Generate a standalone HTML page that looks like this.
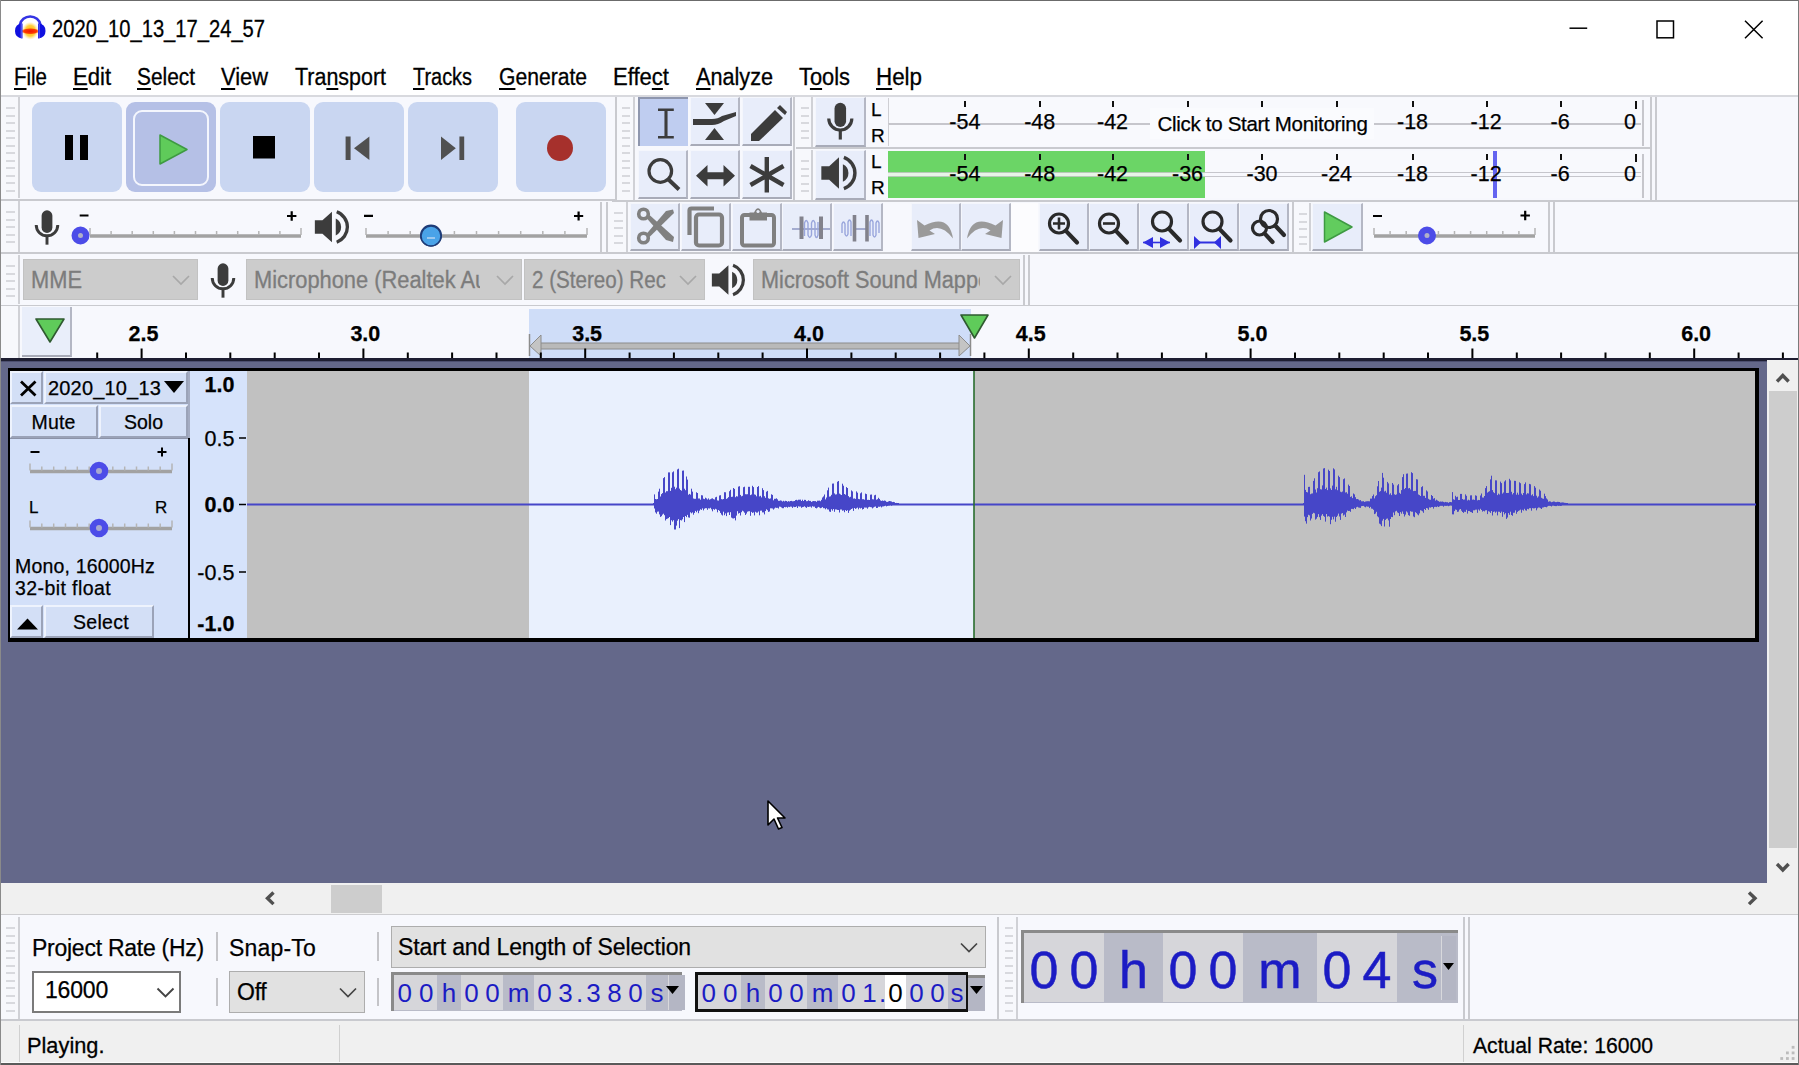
<!DOCTYPE html>
<html><head><meta charset="utf-8"><title>Audacity</title>
<style>
html,body{margin:0;padding:0;background:#fff;}
body{width:1799px;height:1065px;overflow:hidden;position:relative;font-family:"Liberation Sans",sans-serif;}
.r{position:absolute;box-sizing:border-box;}
.t{position:absolute;white-space:pre;-webkit-text-stroke:0.25px currentColor;}
svg{position:absolute;overflow:visible;}
u{text-decoration:underline;text-underline-offset:2.5px;text-decoration-thickness:1.6px;}
</style></head><body>
<div class="r" style="left:0px;top:0px;width:1799px;height:55px;background:#fff;"></div>
<div class="r" style="left:0px;top:0px;width:1799px;height:1px;background:#6b6b6b;"></div>
<svg style="left:0;top:0" width="60" height="50" viewBox="0 0 60 50">
<defs><radialGradient id="ag" cx="0.5" cy="0.5" r="0.5"><stop offset="0" stop-color="#FFB400"/><stop offset="0.6" stop-color="#FFD040"/><stop offset="1" stop-color="#FFE890" stop-opacity="0"/></radialGradient>
<radialGradient id="ar" cx="0.5" cy="0.5" r="0.5"><stop offset="0" stop-color="#F01800"/><stop offset="0.7" stop-color="#FF3C00"/><stop offset="1" stop-color="#FF6A00" stop-opacity="0"/></radialGradient></defs>
<ellipse cx="30.300" cy="30.800" rx="8.500" ry="9" fill="url(#ag)"/>
<ellipse cx="30.300" cy="31.200" rx="9.500" ry="3.200" fill="url(#ar)"/>
<path d="M19.800 25 A10.600 10.600 0 0 1 40.600 25" fill="none" stroke="#3434E4" stroke-width="2.600"/>
<path d="M22.500 23.600 V38.400 Q15 38 15 31 Q15 24 22.500 23.600 Z" fill="#1010E0"/>
<path d="M38 23.600 V38.400 Q45.500 38 45.500 31 Q45.500 24 38 23.600 Z" fill="#1010E0"/>
<path d="M21.300 24 V38.200" stroke="#5050F0" stroke-width="1.400"/><path d="M39.200 24 V38.200" stroke="#5050F0" stroke-width="1.400"/>
</svg>
<div class="t " style="left:52.00px;top:16.00px;font-size:23.5px;line-height:26.25px;color:#000;font-weight:400;transform:scaleX(0.8578);transform-origin:0 0;-webkit-text-stroke:0.3px #000;">2020_10_13_17_24_57</div>
<svg style="left:1560px;top:10px" width="220" height="40" viewBox="0 0 220 40">
<path d="M9.500 18.200 H27.200" stroke="#000" stroke-width="1.5" fill="none"/>
<rect x="97" y="11" width="16.500" height="16.800" stroke="#000" stroke-width="1.5" fill="none"/>
<path d="M185 10.800 L202.600 28.200 M202.600 10.800 L185 28.200" stroke="#000" stroke-width="1.5" fill="none"/>
</svg>
<div class="t " style="left:14.00px;top:65.00px;font-size:23px;line-height:25.69px;color:#000;font-weight:400;transform:scaleX(0.8904);transform-origin:0 0;-webkit-text-stroke:0.3px #000;"><u>F</u>ile</div>
<div class="t " style="left:73.00px;top:65.00px;font-size:23px;line-height:25.69px;color:#000;font-weight:400;transform:scaleX(0.9588);transform-origin:0 0;-webkit-text-stroke:0.3px #000;"><u>E</u>dit</div>
<div class="t " style="left:137.00px;top:65.00px;font-size:23px;line-height:25.69px;color:#000;font-weight:400;transform:scaleX(0.9073);transform-origin:0 0;-webkit-text-stroke:0.3px #000;"><u>S</u>elect</div>
<div class="t " style="left:221.00px;top:65.00px;font-size:23px;line-height:25.69px;color:#000;font-weight:400;transform:scaleX(0.9507);transform-origin:0 0;-webkit-text-stroke:0.3px #000;"><u>V</u>iew</div>
<div class="t " style="left:295.00px;top:65.00px;font-size:23px;line-height:25.69px;color:#000;font-weight:400;transform:scaleX(0.9327);transform-origin:0 0;-webkit-text-stroke:0.3px #000;">Tra<u>n</u>sport</div>
<div class="t " style="left:413.00px;top:65.00px;font-size:23px;line-height:25.69px;color:#000;font-weight:400;transform:scaleX(0.8658);transform-origin:0 0;-webkit-text-stroke:0.3px #000;"><u>T</u>racks</div>
<div class="t " style="left:499.00px;top:65.00px;font-size:23px;line-height:25.69px;color:#000;font-weight:400;transform:scaleX(0.9176);transform-origin:0 0;-webkit-text-stroke:0.3px #000;"><u>G</u>enerate</div>
<div class="t " style="left:613.00px;top:65.00px;font-size:23px;line-height:25.69px;color:#000;font-weight:400;transform:scaleX(0.9591);transform-origin:0 0;-webkit-text-stroke:0.3px #000;">Effe<u>c</u>t</div>
<div class="t " style="left:696.00px;top:65.00px;font-size:23px;line-height:25.69px;color:#000;font-weight:400;transform:scaleX(0.9410);transform-origin:0 0;-webkit-text-stroke:0.3px #000;"><u>A</u>nalyze</div>
<div class="t " style="left:799.00px;top:65.00px;font-size:23px;line-height:25.69px;color:#000;font-weight:400;transform:scaleX(0.9498);transform-origin:0 0;-webkit-text-stroke:0.3px #000;">T<u>o</u>ols</div>
<div class="t " style="left:876.00px;top:65.00px;font-size:23px;line-height:25.69px;color:#000;font-weight:400;transform:scaleX(0.9725);transform-origin:0 0;-webkit-text-stroke:0.3px #000;"><u>H</u>elp</div>
<div class="r" style="left:0px;top:95px;width:1799px;height:212px;background:#F7F8FD;"></div>
<div class="r" style="left:0px;top:95px;width:1799px;height:2px;background:#D8D9DE;"></div>
<div class="r" style="left:0px;top:199px;width:616px;height:2px;background:#C9CACF;"></div>
<div class="r" style="left:0px;top:252px;width:1799px;height:2px;background:#C9CACF;"></div>
<div class="r" style="left:0px;top:305px;width:1799px;height:2px;background:#C9CACF;"></div>
<div class="r" style="left:0px;top:97px;width:20px;height:101px;background:#F7F8FC;border-right:2px solid #D0D1D6"></div>
<div class="r" style="left:6.0px;top:107px;width:9.0px;height:2px;background:#D8D9DE;"></div>
<div class="r" style="left:6.0px;top:114.5px;width:9.0px;height:2px;background:#D8D9DE;"></div>
<div class="r" style="left:6.0px;top:122.0px;width:9.0px;height:2px;background:#D8D9DE;"></div>
<div class="r" style="left:6.0px;top:129.5px;width:9.0px;height:2px;background:#D8D9DE;"></div>
<div class="r" style="left:6.0px;top:137.0px;width:9.0px;height:2px;background:#D8D9DE;"></div>
<div class="r" style="left:6.0px;top:144.5px;width:9.0px;height:2px;background:#D8D9DE;"></div>
<div class="r" style="left:6.0px;top:152.0px;width:9.0px;height:2px;background:#D8D9DE;"></div>
<div class="r" style="left:6.0px;top:159.5px;width:9.0px;height:2px;background:#D8D9DE;"></div>
<div class="r" style="left:6.0px;top:167.0px;width:9.0px;height:2px;background:#D8D9DE;"></div>
<div class="r" style="left:6.0px;top:174.5px;width:9.0px;height:2px;background:#D8D9DE;"></div>
<div class="r" style="left:6.0px;top:182.0px;width:9.0px;height:2px;background:#D8D9DE;"></div>
<div class="r" style="left:6.0px;top:189.5px;width:9.0px;height:2px;background:#D8D9DE;"></div>
<div class="r" style="left:32px;top:102px;width:90px;height:90px;background:#C9D6F1;border-radius:9px"></div>
<div class="r" style="left:126px;top:102px;width:90px;height:90px;background:#B5C0E6;border-radius:9px"></div>
<div class="r" style="left:220px;top:102px;width:90px;height:90px;background:#C9D6F1;border-radius:9px"></div>
<div class="r" style="left:314px;top:102px;width:90px;height:90px;background:#C9D6F1;border-radius:9px"></div>
<div class="r" style="left:408px;top:102px;width:90px;height:90px;background:#C9D6F1;border-radius:9px"></div>
<div class="r" style="left:516px;top:102px;width:90px;height:90px;background:#C9D6F1;border-radius:9px"></div>
<div class="r" style="left:133px;top:110px;width:76px;height:76px;background:transparent;border:2px solid #F4F6FD;border-radius:9px"></div>
<svg style="left:0;top:0" width="620" height="200" viewBox="0 0 620 200">
<rect x="65" y="135" width="8" height="25" fill="#000"/><rect x="80" y="135" width="8" height="25" fill="#000"/>
<path d="M160 135 L187 149.500 L160 164 Z" fill="#5FCB5A" stroke="#3E9A42" stroke-width="1.5" stroke-linejoin="round"/>
<rect x="253" y="136" width="22" height="22.500" fill="#000"/>
<rect x="345.600" y="136.500" width="5" height="23.500" fill="#505050"/><path d="M369.400 136.500 L354 148.200 L369.400 160 Z" fill="#505050"/>
<rect x="459.400" y="136.500" width="4.800" height="23.500" fill="#505050"/><path d="M441 136.500 L455.800 148.200 L441 160 Z" fill="#505050"/>
<circle cx="560" cy="148" r="13" fill="#A6302C"/>
</svg>
<div class="r" style="left:615px;top:97px;width:2px;height:103px;background:#C9CACF;"></div>
<div class="r" style="left:617px;top:97px;width:18px;height:103px;background:#F7F8FC;border-right:2px solid #D0D1D6"></div>
<div class="r" style="left:622.4px;top:107px;width:8.1px;height:2px;background:#D8D9DE;"></div>
<div class="r" style="left:622.4px;top:114.5px;width:8.1px;height:2px;background:#D8D9DE;"></div>
<div class="r" style="left:622.4px;top:122.0px;width:8.1px;height:2px;background:#D8D9DE;"></div>
<div class="r" style="left:622.4px;top:129.5px;width:8.1px;height:2px;background:#D8D9DE;"></div>
<div class="r" style="left:622.4px;top:137.0px;width:8.1px;height:2px;background:#D8D9DE;"></div>
<div class="r" style="left:622.4px;top:144.5px;width:8.1px;height:2px;background:#D8D9DE;"></div>
<div class="r" style="left:622.4px;top:152.0px;width:8.1px;height:2px;background:#D8D9DE;"></div>
<div class="r" style="left:622.4px;top:159.5px;width:8.1px;height:2px;background:#D8D9DE;"></div>
<div class="r" style="left:622.4px;top:167.0px;width:8.1px;height:2px;background:#D8D9DE;"></div>
<div class="r" style="left:622.4px;top:174.5px;width:8.1px;height:2px;background:#D8D9DE;"></div>
<div class="r" style="left:622.4px;top:182.0px;width:8.1px;height:2px;background:#D8D9DE;"></div>
<div class="r" style="left:622.4px;top:189.5px;width:8.1px;height:2px;background:#D8D9DE;"></div>
<div class="r" style="left:638px;top:97px;width:50px;height:49px;background:#BFCDF0;border-top:2px solid #8E96AE;border-left:2px solid #8E96AE"></div>
<div class="r" style="left:690px;top:97px;width:50px;height:49px;background:#E8EDFA;border-bottom:2px solid #A8ABB8;border-right:2px solid #B4B7C4;border-top:1px solid #F4F6FC;border-left:1px solid #F4F6FC"></div>
<div class="r" style="left:742px;top:97px;width:50px;height:49px;background:#E8EDFA;border-bottom:2px solid #A8ABB8;border-right:2px solid #B4B7C4;border-top:1px solid #F4F6FC;border-left:1px solid #F4F6FC"></div>
<div class="r" style="left:638px;top:150px;width:50px;height:49px;background:#E8EDFA;border-bottom:2px solid #A8ABB8;border-right:2px solid #B4B7C4;border-top:1px solid #F4F6FC;border-left:1px solid #F4F6FC"></div>
<div class="r" style="left:690px;top:150px;width:50px;height:49px;background:#E8EDFA;border-bottom:2px solid #A8ABB8;border-right:2px solid #B4B7C4;border-top:1px solid #F4F6FC;border-left:1px solid #F4F6FC"></div>
<div class="r" style="left:742px;top:150px;width:50px;height:49px;background:#E8EDFA;border-bottom:2px solid #A8ABB8;border-right:2px solid #B4B7C4;border-top:1px solid #F4F6FC;border-left:1px solid #F4F6FC"></div>
<svg style="left:0;top:0" width="900" height="260" viewBox="0 0 900 260">
<!-- I-beam -->
<g stroke="#3C3C3C" fill="none"><path d="M666 109.500 V137.500" stroke-width="3.1"/><path d="M658 109.700 H673.800 M658 137.300 H673.800" stroke-width="2.5"/></g>
<!-- envelope tool -->
<g fill="#3C3C3C"><path d="M705 103 H724 L714.500 115 Z"/><path d="M705 140 H724 L714.500 128 Z"/>
<path d="M693 119 H712 Q718 119 722 116 L736 112 L736 116 L724 121 Q718 125 712 125 H693 Z"/></g>
<!-- pencil -->
<g fill="#3C3C3C"><path d="M751 134 L775 110 L783 118 L759 141 L751 141 Z"/><path d="M777 108 L780 105 L787 112 L785 115 Z"/></g>
<!-- zoom -->
<g stroke="#3C3C3C" fill="none"><circle cx="660.300" cy="171" r="11.300" stroke-width="3.2"/><path d="M668.500 179.500 L679 189.500" stroke-width="4"/></g>
<!-- time shift -->
<g fill="#3C3C3C"><path d="M696 175.700 L707.500 165 V172.200 H723.500 V165 L735 175.700 L723.500 186.500 V179.300 H707.500 V186.500 Z"/></g>
<!-- multi -->
<g stroke="#3C3C3C" stroke-width="4.4" fill="none"><path d="M766.800 157 V192.500 M750.500 166 L783.500 185 M783.500 166 L750.500 185"/></g>
</svg>
<div class="r" style="left:793px;top:97px;width:2px;height:104px;background:#C9CACF;"></div>
<div class="r" style="left:796px;top:97px;width:17px;height:50px;background:#F7F8FC;border-right:2px solid #D0D1D6"></div>
<div class="r" style="left:801.1px;top:107px;width:7.65px;height:2px;background:#D8D9DE;"></div>
<div class="r" style="left:801.1px;top:114.5px;width:7.65px;height:2px;background:#D8D9DE;"></div>
<div class="r" style="left:801.1px;top:122.0px;width:7.65px;height:2px;background:#D8D9DE;"></div>
<div class="r" style="left:801.1px;top:129.5px;width:7.65px;height:2px;background:#D8D9DE;"></div>
<div class="r" style="left:801.1px;top:137.0px;width:7.65px;height:2px;background:#D8D9DE;"></div>
<div class="r" style="left:796px;top:150px;width:17px;height:50px;background:#F7F8FC;border-right:2px solid #D0D1D6"></div>
<div class="r" style="left:801.1px;top:160px;width:7.65px;height:2px;background:#D8D9DE;"></div>
<div class="r" style="left:801.1px;top:167.5px;width:7.65px;height:2px;background:#D8D9DE;"></div>
<div class="r" style="left:801.1px;top:175.0px;width:7.65px;height:2px;background:#D8D9DE;"></div>
<div class="r" style="left:801.1px;top:182.5px;width:7.65px;height:2px;background:#D8D9DE;"></div>
<div class="r" style="left:801.1px;top:190.0px;width:7.65px;height:2px;background:#D8D9DE;"></div>
<div class="r" style="left:815px;top:97px;width:51px;height:50px;background:#E8EDFA;border-bottom:2px solid #A8ABB8;border-right:2px solid #B4B7C4;border-top:1px solid #F4F6FC;border-left:1px solid #F4F6FC"></div>
<div class="r" style="left:815px;top:150px;width:51px;height:50px;background:#E8EDFA;border-bottom:2px solid #A8ABB8;border-right:2px solid #B4B7C4;border-top:1px solid #F4F6FC;border-left:1px solid #F4F6FC"></div>
<svg style="left:0;top:0" width="900" height="260" viewBox="0 0 900 260"><g transform="translate(840.3,121.7) scale(1.05)" fill="none" stroke="#3C3C3C">
<rect x="-5.5" y="-18" width="11" height="23" rx="5.5" fill="#3C3C3C" stroke="none"/>
<path d="M-11 -3 A11 11 0 0 0 11 -3" stroke-width="3"/><path d="M0 8 V17" stroke-width="3"/></g><g transform="translate(838,173) scale(0.98)" fill="#3C3C3C" stroke="none">
<path d="M-17 -7 H-9 L1 -16 V16 L-9 7 H-17 Z"/>
<path d="M5 -9 A10 10 0 0 1 5 9 Z"/>
<path d="M6 -16 A17 17 0 0 1 6 16" fill="none" stroke="#3C3C3C" stroke-width="3.5"/></g></svg>
<div class="t " style="left:871.00px;top:99.00px;font-size:19px;line-height:21.22px;color:#000;font-weight:400;">L</div>
<div class="t " style="left:871.00px;top:125.00px;font-size:19px;line-height:21.22px;color:#000;font-weight:400;">R</div>
<div class="t " style="left:871.00px;top:151.00px;font-size:19px;line-height:21.22px;color:#000;font-weight:400;">L</div>
<div class="t " style="left:871.00px;top:176.50px;font-size:19px;line-height:21.22px;color:#000;font-weight:400;">R</div>
<div class="r" style="left:888px;top:98px;width:753px;height:25px;background:#F8F9FD;border-left:1px solid #CFCFD4"></div>
<div class="r" style="left:888px;top:123px;width:753px;height:23px;background:#F8F9FD;border-top:2px solid #C6C6CC;border-left:1px solid #CFCFD4"></div>
<div class="r" style="left:888px;top:151px;width:753px;height:21px;background:#F8F9FD;"></div>
<div class="r" style="left:888px;top:177px;width:753px;height:21px;background:#F8F9FD;"></div>
<div class="r" style="left:888px;top:172px;width:753px;height:1px;background:#C6C6CC;"></div>
<div class="r" style="left:888px;top:176px;width:753px;height:1px;background:#C6C6CC;"></div>
<div class="r" style="left:888px;top:151px;width:317px;height:21px;background:#6BD566;"></div>
<div class="r" style="left:888px;top:177px;width:317px;height:21px;background:#6BD566;"></div>
<div class="r" style="left:888px;top:172px;width:317px;height:5px;background:#E8F4E8;border-top:1px solid #B8C8B8;border-bottom:1px solid #B8C8B8"></div>
<div class="r" style="left:1493px;top:151px;width:4px;height:47px;background:#6464F0;"></div>
<div class="r" style="left:964px;top:101px;width:2px;height:6px;background:#111;"></div>
<div class="r" style="left:964px;top:154px;width:2px;height:6px;background:#111;"></div>
<div class="t " style="left:949.30px;top:110.00px;font-size:21.5px;line-height:24.02px;color:#000;font-weight:400;">-54</div>
<div class="t " style="left:949.30px;top:162.00px;font-size:21.5px;line-height:24.02px;color:#000;font-weight:400;">-54</div>
<div class="r" style="left:1039px;top:101px;width:2px;height:6px;background:#111;"></div>
<div class="r" style="left:1039px;top:154px;width:2px;height:6px;background:#111;"></div>
<div class="t " style="left:1024.20px;top:110.00px;font-size:21.5px;line-height:24.02px;color:#000;font-weight:400;">-48</div>
<div class="t " style="left:1024.20px;top:162.00px;font-size:21.5px;line-height:24.02px;color:#000;font-weight:400;">-48</div>
<div class="r" style="left:1112px;top:101px;width:2px;height:6px;background:#111;"></div>
<div class="r" style="left:1112px;top:154px;width:2px;height:6px;background:#111;"></div>
<div class="t " style="left:1097.00px;top:110.00px;font-size:21.5px;line-height:24.02px;color:#000;font-weight:400;">-42</div>
<div class="t " style="left:1097.00px;top:162.00px;font-size:21.5px;line-height:24.02px;color:#000;font-weight:400;">-42</div>
<div class="r" style="left:1187px;top:101px;width:2px;height:6px;background:#111;"></div>
<div class="r" style="left:1187px;top:154px;width:2px;height:6px;background:#111;"></div>
<div class="t " style="left:1172.00px;top:162.00px;font-size:21.5px;line-height:24.02px;color:#000;font-weight:400;">-36</div>
<div class="r" style="left:1261px;top:101px;width:2px;height:6px;background:#111;"></div>
<div class="r" style="left:1261px;top:154px;width:2px;height:6px;background:#111;"></div>
<div class="t " style="left:1246.50px;top:162.00px;font-size:21.5px;line-height:24.02px;color:#000;font-weight:400;">-30</div>
<div class="r" style="left:1336px;top:101px;width:2px;height:6px;background:#111;"></div>
<div class="r" style="left:1336px;top:154px;width:2px;height:6px;background:#111;"></div>
<div class="t " style="left:1321.00px;top:162.00px;font-size:21.5px;line-height:24.02px;color:#000;font-weight:400;">-24</div>
<div class="r" style="left:1412px;top:101px;width:2px;height:6px;background:#111;"></div>
<div class="r" style="left:1412px;top:154px;width:2px;height:6px;background:#111;"></div>
<div class="t " style="left:1397.00px;top:110.00px;font-size:21.5px;line-height:24.02px;color:#000;font-weight:400;">-18</div>
<div class="t " style="left:1397.00px;top:162.00px;font-size:21.5px;line-height:24.02px;color:#000;font-weight:400;">-18</div>
<div class="r" style="left:1486px;top:101px;width:2px;height:6px;background:#111;"></div>
<div class="r" style="left:1486px;top:154px;width:2px;height:6px;background:#111;"></div>
<div class="t " style="left:1470.60px;top:110.00px;font-size:21.5px;line-height:24.02px;color:#000;font-weight:400;">-12</div>
<div class="t " style="left:1470.60px;top:162.00px;font-size:21.5px;line-height:24.02px;color:#000;font-weight:400;">-12</div>
<div class="r" style="left:1560px;top:101px;width:2px;height:6px;background:#111;"></div>
<div class="r" style="left:1560px;top:154px;width:2px;height:6px;background:#111;"></div>
<div class="t " style="left:1550.50px;top:110.00px;font-size:21.5px;line-height:24.02px;color:#000;font-weight:400;">-6</div>
<div class="t " style="left:1550.50px;top:162.00px;font-size:21.5px;line-height:24.02px;color:#000;font-weight:400;">-6</div>
<div class="r" style="left:1635px;top:101px;width:2px;height:8px;background:#111;"></div>
<div class="r" style="left:1635px;top:154px;width:2px;height:8px;background:#111;"></div>
<div class="t " style="left:1624.00px;top:110.00px;font-size:21.5px;line-height:24.02px;color:#000;font-weight:400;">0</div>
<div class="t " style="left:1624.00px;top:162.00px;font-size:21.5px;line-height:24.02px;color:#000;font-weight:400;">0</div>
<div class="r" style="left:1150px;top:108px;width:224px;height:31px;background:#FAFBFE;"></div>
<div class="t " style="left:1157.50px;top:112.50px;font-size:20.5px;line-height:22.90px;color:#000;font-weight:400;letter-spacing:-0.304px;">Click to Start Monitoring</div>
<div class="r" style="left:1642px;top:100px;width:2px;height:46px;background:#C6C6CC;"></div>
<div class="r" style="left:1642px;top:154px;width:2px;height:44px;background:#C6C6CC;"></div>
<div class="r" style="left:1650px;top:97px;width:2px;height:104px;background:#C9CACF;"></div>
<div class="r" style="left:1655px;top:97px;width:2px;height:104px;background:#C9CACF;"></div>
<div class="r" style="left:796px;top:147px;width:856px;height:2px;background:#C9CACF;"></div>
<div class="r" style="left:612px;top:200px;width:1187px;height:2px;background:#C9CACF;"></div>
<div class="r" style="left:0px;top:201px;width:20px;height:51px;background:#F7F8FC;border-right:2px solid #D0D1D6"></div>
<div class="r" style="left:6.0px;top:211px;width:9.0px;height:2px;background:#D8D9DE;"></div>
<div class="r" style="left:6.0px;top:218.5px;width:9.0px;height:2px;background:#D8D9DE;"></div>
<div class="r" style="left:6.0px;top:226.0px;width:9.0px;height:2px;background:#D8D9DE;"></div>
<div class="r" style="left:6.0px;top:233.5px;width:9.0px;height:2px;background:#D8D9DE;"></div>
<div class="r" style="left:6.0px;top:241.0px;width:9.0px;height:2px;background:#D8D9DE;"></div>
<svg style="left:0;top:0" width="1600" height="260" viewBox="0 0 1600 260">
<g transform="translate(47,228) scale(0.98)" fill="none" stroke="#3C3C3C">
<rect x="-5.5" y="-18" width="11" height="23" rx="5.5" fill="#3C3C3C" stroke="none"/>
<path d="M-11 -3 A11 11 0 0 0 11 -3" stroke-width="3"/><path d="M0 8 V17" stroke-width="3"/></g><g transform="translate(331,227) scale(0.95)" fill="#3C3C3C" stroke="none">
<path d="M-17 -7 H-9 L1 -16 V16 L-9 7 H-17 Z"/>
<path d="M5 -9 A10 10 0 0 1 5 9 Z"/>
<path d="M6 -16 A17 17 0 0 1 6 16" fill="none" stroke="#3C3C3C" stroke-width="3.5"/></g>
<path d="M90 236 H301" stroke="#A2A2A2" stroke-width="3.4"/><path d="M90.0 235 V228" stroke="#B5B5B5" stroke-width="1.5"/><path d="M111.1 235 V231" stroke="#B5B5B5" stroke-width="1.5"/><path d="M132.2 235 V231" stroke="#B5B5B5" stroke-width="1.5"/><path d="M153.3 235 V231" stroke="#B5B5B5" stroke-width="1.5"/><path d="M174.4 235 V231" stroke="#B5B5B5" stroke-width="1.5"/><path d="M195.5 235 V231" stroke="#B5B5B5" stroke-width="1.5"/><path d="M216.6 235 V231" stroke="#B5B5B5" stroke-width="1.5"/><path d="M237.7 235 V231" stroke="#B5B5B5" stroke-width="1.5"/><path d="M258.8 235 V231" stroke="#B5B5B5" stroke-width="1.5"/><path d="M279.9 235 V231" stroke="#B5B5B5" stroke-width="1.5"/><path d="M301.0 235 V228" stroke="#B5B5B5" stroke-width="1.5"/><circle cx="80.5" cy="235.5" r="5.75" fill="#B0B0C8" stroke="#4C4CE8" stroke-width="6.5"/>
<path d="M366 236 H587" stroke="#A2A2A2" stroke-width="3.4"/><path d="M366.0 235 V228" stroke="#B5B5B5" stroke-width="1.5"/><path d="M388.1 235 V231" stroke="#B5B5B5" stroke-width="1.5"/><path d="M410.2 235 V231" stroke="#B5B5B5" stroke-width="1.5"/><path d="M432.3 235 V231" stroke="#B5B5B5" stroke-width="1.5"/><path d="M454.4 235 V231" stroke="#B5B5B5" stroke-width="1.5"/><path d="M476.5 235 V231" stroke="#B5B5B5" stroke-width="1.5"/><path d="M498.6 235 V231" stroke="#B5B5B5" stroke-width="1.5"/><path d="M520.7 235 V231" stroke="#B5B5B5" stroke-width="1.5"/><path d="M542.8 235 V231" stroke="#B5B5B5" stroke-width="1.5"/><path d="M564.9 235 V231" stroke="#B5B5B5" stroke-width="1.5"/><path d="M587.0 235 V228" stroke="#B5B5B5" stroke-width="1.5"/><circle cx="431" cy="235.5" r="8.6" fill="#4AA3E8" stroke="#1E3C78" stroke-width="4.8"/>
<circle cx="431" cy="236" r="10" fill="#4AA3E8" stroke="#1E3C78" stroke-width="1.5"/>
<path d="M427 238 H435" stroke="#9CC8EE" stroke-width="2"/>
<g stroke="#000" stroke-width="2.2"><path d="M79.700 215.500 H88.500 M287 216 H296.400 M291.700 211.300 V220.700 M364 215.800 H373 M574 216 H583.200 M578.600 211.400 V220.600"/></g>
</svg>
<div class="r" style="left:600px;top:202px;width:2px;height:50px;background:#C9CACF;"></div>
<div class="r" style="left:606px;top:202px;width:2px;height:50px;background:#C9CACF;"></div>
<div class="r" style="left:608px;top:202px;width:20px;height:50px;background:#F7F8FC;border-right:2px solid #D0D1D6"></div>
<div class="r" style="left:614.0px;top:212px;width:9.0px;height:2px;background:#D8D9DE;"></div>
<div class="r" style="left:614.0px;top:219.5px;width:9.0px;height:2px;background:#D8D9DE;"></div>
<div class="r" style="left:614.0px;top:227.0px;width:9.0px;height:2px;background:#D8D9DE;"></div>
<div class="r" style="left:614.0px;top:234.5px;width:9.0px;height:2px;background:#D8D9DE;"></div>
<div class="r" style="left:614.0px;top:242.0px;width:9.0px;height:2px;background:#D8D9DE;"></div>
<div class="r" style="left:630px;top:203px;width:50px;height:48px;background:#E8EDFA;border-bottom:2px solid #A8ABB8;border-right:2px solid #B4B7C4;border-top:1px solid #F4F6FC;border-left:1px solid #F4F6FC"></div>
<div class="r" style="left:681px;top:203px;width:50px;height:48px;background:#E8EDFA;border-bottom:2px solid #A8ABB8;border-right:2px solid #B4B7C4;border-top:1px solid #F4F6FC;border-left:1px solid #F4F6FC"></div>
<div class="r" style="left:732px;top:203px;width:50px;height:48px;background:#E8EDFA;border-bottom:2px solid #A8ABB8;border-right:2px solid #B4B7C4;border-top:1px solid #F4F6FC;border-left:1px solid #F4F6FC"></div>
<div class="r" style="left:782px;top:203px;width:50px;height:48px;background:#E8EDFA;border-bottom:2px solid #A8ABB8;border-right:2px solid #B4B7C4;border-top:1px solid #F4F6FC;border-left:1px solid #F4F6FC"></div>
<div class="r" style="left:833px;top:203px;width:50px;height:48px;background:#E8EDFA;border-bottom:2px solid #A8ABB8;border-right:2px solid #B4B7C4;border-top:1px solid #F4F6FC;border-left:1px solid #F4F6FC"></div>
<div class="r" style="left:911px;top:203px;width:50px;height:48px;background:#E8EDFA;border-bottom:2px solid #A8ABB8;border-right:2px solid #B4B7C4;border-top:1px solid #F4F6FC;border-left:1px solid #F4F6FC"></div>
<div class="r" style="left:961px;top:203px;width:50px;height:48px;background:#E8EDFA;border-bottom:2px solid #A8ABB8;border-right:2px solid #B4B7C4;border-top:1px solid #F4F6FC;border-left:1px solid #F4F6FC"></div>
<div class="r" style="left:1011px;top:203px;width:27px;height:49px;background:#FCFCFE;"></div>
<div class="r" style="left:1039px;top:203px;width:50px;height:48px;background:#E8EDFA;border-bottom:2px solid #A8ABB8;border-right:2px solid #B4B7C4;border-top:1px solid #F4F6FC;border-left:1px solid #F4F6FC"></div>
<div class="r" style="left:1089px;top:203px;width:50px;height:48px;background:#E8EDFA;border-bottom:2px solid #A8ABB8;border-right:2px solid #B4B7C4;border-top:1px solid #F4F6FC;border-left:1px solid #F4F6FC"></div>
<div class="r" style="left:1139px;top:203px;width:50px;height:48px;background:#E8EDFA;border-bottom:2px solid #A8ABB8;border-right:2px solid #B4B7C4;border-top:1px solid #F4F6FC;border-left:1px solid #F4F6FC"></div>
<div class="r" style="left:1189px;top:203px;width:50px;height:48px;background:#E8EDFA;border-bottom:2px solid #A8ABB8;border-right:2px solid #B4B7C4;border-top:1px solid #F4F6FC;border-left:1px solid #F4F6FC"></div>
<div class="r" style="left:1239px;top:203px;width:50px;height:48px;background:#E8EDFA;border-bottom:2px solid #A8ABB8;border-right:2px solid #B4B7C4;border-top:1px solid #F4F6FC;border-left:1px solid #F4F6FC"></div>
<svg style="left:0;top:0" width="1600" height="260" viewBox="0 0 1600 260">
<!-- cut -->
<g stroke="#808080" fill="none" stroke-width="3.6"><circle cx="643.5" cy="214" r="4.8"/><circle cx="643.5" cy="238" r="4.8"/></g>
<g fill="#808080"><path d="M646 217.500 L649.500 215 L674 237 L673 242 L666 240 Z"/><path d="M646 234.500 L649.500 237 L674 213 L673 209.500 L666 211 Z"/></g>
<!-- copy -->
<g stroke="#808080" fill="none" stroke-width="4.2" stroke-linejoin="round"><path d="M689.500 235 V210.500 Q689.500 208.500 691.500 208.500 H714"/><rect x="696" y="214.500" width="26" height="31" rx="3"/></g>
<!-- paste -->
<g stroke="#808080" fill="none" stroke-width="4" stroke-linejoin="round"><rect x="742" y="215" width="32" height="30.500" rx="2.500"/></g>
<path d="M749.500 220.500 V212.500 H754 Q758 204 762 212.500 H767 V220.500 Z" fill="#808080"/><circle cx="758" cy="211.500" r="1.6" fill="#E8EDFA"/>
<!-- trim -->
<path d="M792 229 H830" stroke="#A4ACD0" stroke-width="2"/>
<path d="M804.500 236 V223 Q806.200 218 808 223 V235 Q809.700 240 811.500 235 V223 Q813.200 218 815 223 V235 Q816.500 240 818 235 V222" stroke="#9AA6DC" stroke-width="1.4" fill="none"/>
<g stroke="#82828C" stroke-width="4" fill="none"><path d="M801.500 216.500 V239 M821 216.500 V239"/></g>
<!-- silence -->
<path d="M855 229 H867" stroke="#A4ACD0" stroke-width="2"/>
<path d="M842 233 V224 Q843.500 220 845 224 V234 Q846.500 238 848 234 V222 Q849.500 218 851 222 V236 M870 236 V222 Q871.500 218 873 222 V235 Q874.500 239 876 235 V223 Q877.500 219 879 223 V233" stroke="#9AA6DC" stroke-width="1.4" fill="none"/>
<g stroke="#82828C" stroke-width="3.6" fill="none"><path d="M854.500 215 V241.500 M867 215 V241.500"/></g>
<!-- undo / redo -->
<g fill="#9A9A9A"><path d="M917 220 L918.500 238 L935 234 L929.500 230.500 Q941 223 953 238.500 Q949 213 924.500 225.500 Z"/>
<path d="M1003 220 L1001.500 238 L985 234 L990.500 230.500 Q979 223 967 238.500 Q971 213 995.500 225.500 Z"/></g>
</svg>
<svg style="left:0;top:0" width="1600" height="260" viewBox="0 0 1600 260">
<g stroke="#2A2A2A" fill="none"><circle cx="1059" cy="223.5" r="9.5" stroke-width="3.2"/><path d="M1066.125 231.1 L1077 242.5" stroke-width="4.2" stroke-linecap="round"/></g><path d="M1053 223.500 H1065 M1059 217.500 V229.500" stroke="#2A2A2A" stroke-width="2.6"/>
<g stroke="#2A2A2A" fill="none"><circle cx="1109" cy="223.5" r="9.5" stroke-width="3.2"/><path d="M1116.125 231.1 L1127 242.5" stroke-width="4.2" stroke-linecap="round"/></g><path d="M1103 223.500 H1115" stroke="#2A2A2A" stroke-width="2.6"/>
<g stroke="#2A2A2A" fill="none"><circle cx="1162" cy="221.5" r="9.5" stroke-width="3.2"/><path d="M1169.125 229.1 L1180 240.5" stroke-width="4.2" stroke-linecap="round"/></g><path d="M1143 242.500 H1170" stroke="#3030E0" stroke-width="1.6"/><path d="M1143 242.500 L1153 237 V248 Z M1170 242.500 L1160 237 V248 Z" fill="#3030E0"/>
<g stroke="#2A2A2A" fill="none"><circle cx="1212.5" cy="221.5" r="9.5" stroke-width="3.2"/><path d="M1219.625 229.1 L1230.5 240.5" stroke-width="4.2" stroke-linecap="round"/></g><path d="M1194 242.500 H1221" stroke="#3030E0" stroke-width="2"/><path d="M1194 236 L1201 242.500 L1194 249 Z M1221 236 L1214 242.500 L1221 249 Z" fill="#3030E0"/>
<g stroke="#2A2A2A" fill="none"><circle cx="1269" cy="219" r="8.5" stroke-width="3.2"/><path d="M1275.375 225.8 L1284 235" stroke-width="4.2" stroke-linecap="round"/></g><g stroke="#2A2A2A" fill="none"><circle cx="1259.5" cy="228" r="7" stroke-width="3.2"/><path d="M1264.75 233.6 L1272.5 242" stroke-width="4.2" stroke-linecap="round"/></g>
</svg>
<div class="r" style="left:1292px;top:202px;width:2px;height:50px;background:#C9CACF;"></div>
<div class="r" style="left:1294px;top:203px;width:17px;height:48px;background:#F7F8FC;border-right:2px solid #D0D1D6"></div>
<div class="r" style="left:1299.1px;top:213px;width:7.65px;height:2px;background:#D8D9DE;"></div>
<div class="r" style="left:1299.1px;top:220.5px;width:7.65px;height:2px;background:#D8D9DE;"></div>
<div class="r" style="left:1299.1px;top:228.0px;width:7.65px;height:2px;background:#D8D9DE;"></div>
<div class="r" style="left:1299.1px;top:235.5px;width:7.65px;height:2px;background:#D8D9DE;"></div>
<div class="r" style="left:1299.1px;top:243.0px;width:7.65px;height:2px;background:#D8D9DE;"></div>
<div class="r" style="left:1312px;top:203px;width:51px;height:48px;background:#E8EDFA;border-bottom:2px solid #A8ABB8;border-right:2px solid #B4B7C4;border-top:1px solid #F4F6FC;border-left:1px solid #F4F6FC"></div>
<svg style="left:0;top:0" width="1600" height="260" viewBox="0 0 1600 260">
<path d="M1324.500 212 L1352 227 L1324.500 242 Z" fill="#62CC5E" stroke="#3E9A42" stroke-width="1.5" stroke-linejoin="round"/>
<path d="M1374 236 H1535" stroke="#A2A2A2" stroke-width="3.4"/><path d="M1374.0 235 V228" stroke="#B5B5B5" stroke-width="1.5"/><path d="M1390.1 235 V231" stroke="#B5B5B5" stroke-width="1.5"/><path d="M1406.2 235 V231" stroke="#B5B5B5" stroke-width="1.5"/><path d="M1422.3 235 V231" stroke="#B5B5B5" stroke-width="1.5"/><path d="M1438.4 235 V231" stroke="#B5B5B5" stroke-width="1.5"/><path d="M1454.5 235 V231" stroke="#B5B5B5" stroke-width="1.5"/><path d="M1470.6 235 V231" stroke="#B5B5B5" stroke-width="1.5"/><path d="M1486.7 235 V231" stroke="#B5B5B5" stroke-width="1.5"/><path d="M1502.8 235 V231" stroke="#B5B5B5" stroke-width="1.5"/><path d="M1518.9 235 V231" stroke="#B5B5B5" stroke-width="1.5"/><path d="M1535.0 235 V228" stroke="#B5B5B5" stroke-width="1.5"/><circle cx="1427" cy="235.5" r="5.75" fill="#B0B0C8" stroke="#4C4CE8" stroke-width="6.5"/>
<g stroke="#000" stroke-width="2.2"><path d="M1373 216 H1382 M1520.500 215.500 H1529.900 M1525.200 210.800 V220.200"/></g>
</svg>
<div class="r" style="left:1548px;top:202px;width:2px;height:50px;background:#C9CACF;"></div>
<div class="r" style="left:1553px;top:202px;width:2px;height:50px;background:#C9CACF;"></div>
<div class="r" style="left:0px;top:255px;width:20px;height:49px;background:#F7F8FC;border-right:2px solid #D0D1D6"></div>
<div class="r" style="left:6.0px;top:265px;width:9.0px;height:2px;background:#D8D9DE;"></div>
<div class="r" style="left:6.0px;top:272.5px;width:9.0px;height:2px;background:#D8D9DE;"></div>
<div class="r" style="left:6.0px;top:280.0px;width:9.0px;height:2px;background:#D8D9DE;"></div>
<div class="r" style="left:6.0px;top:287.5px;width:9.0px;height:2px;background:#D8D9DE;"></div>
<div class="r" style="left:6.0px;top:295.0px;width:9.0px;height:2px;background:#D8D9DE;"></div>
<div class="r" style="left:23px;top:259px;width:175px;height:41px;background:#CCCCCC;border:1px solid #C2C2C2"></div>
<div class="t " style="left:31.00px;top:268.30px;font-size:23px;line-height:25.69px;color:#7C7C7C;font-weight:400;transform:scaleX(0.9504);transform-origin:0 0;-webkit-text-stroke:0.3px #7C7C7C;">MME</div>
<svg style="left:0;top:0" width="1799" height="1065"><path d="M173 276.0 L181 284.0 L189 276.0" stroke="#A8A8A8" stroke-width="1.7" fill="none"/></svg>
<div class="r" style="left:246px;top:259px;width:276px;height:41px;background:#CCCCCC;border:1px solid #C2C2C2"></div>
<div class="t " style="left:254.00px;top:268.30px;font-size:23px;line-height:25.69px;color:#7C7C7C;font-weight:400;transform:scaleX(0.9498);transform-origin:0 0;-webkit-text-stroke:0.3px #7C7C7C;overflow:hidden;width:237.94px;">Microphone (Realtek Audio)</div>
<svg style="left:0;top:0" width="1799" height="1065"><path d="M497 276.0 L505 284.0 L513 276.0" stroke="#A8A8A8" stroke-width="1.7" fill="none"/></svg>
<div class="r" style="left:524px;top:259px;width:181px;height:41px;background:#CCCCCC;border:1px solid #C2C2C2"></div>
<div class="t " style="left:531.50px;top:268.30px;font-size:23px;line-height:25.69px;color:#7C7C7C;font-weight:400;transform:scaleX(0.8960);transform-origin:0 0;-webkit-text-stroke:0.3px #7C7C7C;overflow:hidden;width:149.00px;">2 (Stereo) Recording</div>
<svg style="left:0;top:0" width="1799" height="1065"><path d="M680 276.0 L688 284.0 L696 276.0" stroke="#A8A8A8" stroke-width="1.7" fill="none"/></svg>
<div class="r" style="left:753px;top:259px;width:267px;height:41px;background:#CCCCCC;border:1px solid #C2C2C2"></div>
<div class="t " style="left:760.50px;top:268.30px;font-size:23px;line-height:25.69px;color:#7C7C7C;font-weight:400;transform:scaleX(0.9430);transform-origin:0 0;-webkit-text-stroke:0.3px #7C7C7C;overflow:hidden;width:232.23px;">Microsoft Sound Mapper</div>
<svg style="left:0;top:0" width="1799" height="1065"><path d="M995 276.0 L1003 284.0 L1011 276.0" stroke="#A8A8A8" stroke-width="1.7" fill="none"/></svg>
<svg style="left:0;top:0" width="1100" height="310" viewBox="0 0 1100 310"><g transform="translate(223,281) scale(0.98)" fill="none" stroke="#3C3C3C">
<rect x="-5.5" y="-18" width="11" height="23" rx="5.5" fill="#3C3C3C" stroke="none"/>
<path d="M-11 -3 A11 11 0 0 0 11 -3" stroke-width="3"/><path d="M0 8 V17" stroke-width="3"/></g><g transform="translate(727.5,280) scale(0.92)" fill="#3C3C3C" stroke="none">
<path d="M-17 -7 H-9 L1 -16 V16 L-9 7 H-17 Z"/>
<path d="M5 -9 A10 10 0 0 1 5 9 Z"/>
<path d="M6 -16 A17 17 0 0 1 6 16" fill="none" stroke="#3C3C3C" stroke-width="3.5"/></g></svg>
<div class="r" style="left:1023px;top:255px;width:2px;height:50px;background:#C9CACF;"></div>
<div class="r" style="left:1028px;top:255px;width:2px;height:50px;background:#C9CACF;"></div>
<div class="r" style="left:0px;top:306px;width:1799px;height:52px;background:#F7F8FD;"></div>
<div class="r" style="left:0px;top:306px;width:20px;height:52px;background:#F7F8FC;border-right:2px solid #D0D1D6"></div>
<div class="r" style="left:22px;top:307px;width:50px;height:50px;background:#E9EEFA;border-right:2px solid #B4B7C4;border-bottom:2px solid #A8ABB8"></div>
<div class="r" style="left:529px;top:309px;width:442px;height:49px;background:#CFDDF8;"></div>
<svg style="left:0;top:0" width="1799" height="400" viewBox="0 0 1799 400">
<path d="M36 319 H64 L50 342 Z" fill="#5FCB5A" stroke="#2F5A30" stroke-width="1.6" stroke-linejoin="round"/>
<rect x="534" y="343" width="432" height="6" fill="#B9B9B9" stroke="#8C8C8C" stroke-width="1"/>
<path d="M529.500 334 V356" stroke="#8C8C8C" stroke-width="1.5"/><path d="M541 335 V356 L530 346 Z" fill="#C4C4C4" stroke="#8C8C8C" stroke-width="1"/>
<path d="M970.500 334 V356" stroke="#8C8C8C" stroke-width="1.5"/><path d="M959 335 V356 L970 346 Z" fill="#C4C4C4" stroke="#8C8C8C" stroke-width="1"/>
<rect x="96.2" y="352.500" width="2" height="6" fill="#000"/><rect x="140.6" y="348.500" width="2" height="10" fill="#000"/><rect x="185.0" y="352.500" width="2" height="6" fill="#000"/><rect x="229.3" y="352.500" width="2" height="6" fill="#000"/><rect x="273.7" y="352.500" width="2" height="6" fill="#000"/><rect x="318.0" y="352.500" width="2" height="6" fill="#000"/><rect x="362.4" y="348.500" width="2" height="10" fill="#000"/><rect x="406.8" y="352.500" width="2" height="6" fill="#000"/><rect x="451.1" y="352.500" width="2" height="6" fill="#000"/><rect x="495.5" y="352.500" width="2" height="6" fill="#000"/><rect x="539.8" y="352.500" width="2" height="6" fill="#000"/><rect x="584.2" y="348.500" width="2" height="10" fill="#000"/><rect x="628.6" y="352.500" width="2" height="6" fill="#000"/><rect x="672.9" y="352.500" width="2" height="6" fill="#000"/><rect x="717.3" y="352.500" width="2" height="6" fill="#000"/><rect x="761.6" y="352.500" width="2" height="6" fill="#000"/><rect x="806.0" y="348.500" width="2" height="10" fill="#000"/><rect x="850.4" y="352.500" width="2" height="6" fill="#000"/><rect x="894.7" y="352.500" width="2" height="6" fill="#000"/><rect x="939.1" y="352.500" width="2" height="6" fill="#000"/><rect x="983.4" y="352.500" width="2" height="6" fill="#000"/><rect x="1027.8" y="348.500" width="2" height="10" fill="#000"/><rect x="1072.2" y="352.500" width="2" height="6" fill="#000"/><rect x="1116.5" y="352.500" width="2" height="6" fill="#000"/><rect x="1160.9" y="352.500" width="2" height="6" fill="#000"/><rect x="1205.2" y="352.500" width="2" height="6" fill="#000"/><rect x="1249.6" y="348.500" width="2" height="10" fill="#000"/><rect x="1294.0" y="352.500" width="2" height="6" fill="#000"/><rect x="1338.3" y="352.500" width="2" height="6" fill="#000"/><rect x="1382.7" y="352.500" width="2" height="6" fill="#000"/><rect x="1427.0" y="352.500" width="2" height="6" fill="#000"/><rect x="1471.4" y="348.500" width="2" height="10" fill="#000"/><rect x="1515.8" y="352.500" width="2" height="6" fill="#000"/><rect x="1560.1" y="352.500" width="2" height="6" fill="#000"/><rect x="1604.5" y="352.500" width="2" height="6" fill="#000"/><rect x="1648.8" y="352.500" width="2" height="6" fill="#000"/><rect x="1693.2" y="348.500" width="2" height="10" fill="#000"/><rect x="1737.6" y="352.500" width="2" height="6" fill="#000"/><rect x="1781.9" y="352.500" width="2" height="6" fill="#000"/>
<path d="M961 315 H988 L974.500 338 Z" fill="#5FCB5A" stroke="#2F5A30" stroke-width="1.6" stroke-linejoin="round"/>
</svg>
<div class="t " style="left:128.60px;top:321.50px;font-size:21.5px;line-height:24.02px;color:#000;font-weight:700;">2.5</div>
<div class="t " style="left:350.40px;top:321.50px;font-size:21.5px;line-height:24.02px;color:#000;font-weight:700;">3.0</div>
<div class="t " style="left:572.20px;top:321.50px;font-size:21.5px;line-height:24.02px;color:#000;font-weight:700;">3.5</div>
<div class="t " style="left:794.00px;top:321.50px;font-size:21.5px;line-height:24.02px;color:#000;font-weight:700;">4.0</div>
<div class="t " style="left:1015.80px;top:321.50px;font-size:21.5px;line-height:24.02px;color:#000;font-weight:700;">4.5</div>
<div class="t " style="left:1237.60px;top:321.50px;font-size:21.5px;line-height:24.02px;color:#000;font-weight:700;">5.0</div>
<div class="t " style="left:1459.40px;top:321.50px;font-size:21.5px;line-height:24.02px;color:#000;font-weight:700;">5.5</div>
<div class="t " style="left:1681.20px;top:321.50px;font-size:21.5px;line-height:24.02px;color:#000;font-weight:700;">6.0</div>
<div class="r" style="left:0px;top:358px;width:1799px;height:3px;background:#1E1E32;"></div>
<div class="r" style="left:0px;top:361px;width:1799px;height:1px;background:#4C4F70;"></div>
<div class="r" style="left:0px;top:362px;width:1767px;height:521px;background:#64688A;"></div>
<div class="r" style="left:8px;top:368px;width:1751px;height:274px;background:#000;"></div>
<div class="r" style="left:10px;top:371px;width:178px;height:267px;background:#D3E0F9;"></div>
<div class="r" style="left:190px;top:371px;width:57px;height:267px;background:#D6E3FB;"></div>
<div class="r" style="left:247px;top:371px;width:1508px;height:267px;background:#C1C1C1;"></div>
<div class="r" style="left:529px;top:371px;width:445px;height:267px;background:#E9F0FD;"></div>
<div class="r" style="left:10px;top:371px;width:33px;height:33px;background:#D3DFF6;border-top:2px solid #EEF3FD;border-left:2px solid #EEF3FD;border-bottom:2px solid #9BA3B8;border-right:2px solid #9BA3B8"></div>
<div class="r" style="left:44px;top:371px;width:144px;height:33px;background:#D3DFF6;border-top:2px solid #EEF3FD;border-left:2px solid #EEF3FD;border-bottom:2px solid #9BA3B8;border-right:2px solid #9BA3B8"></div>
<div class="r" style="left:10px;top:405px;width:88px;height:33px;background:#D3DFF6;border-top:2px solid #EEF3FD;border-left:2px solid #EEF3FD;border-bottom:2px solid #9BA3B8;border-right:2px solid #9BA3B8"></div>
<div class="r" style="left:99px;top:405px;width:89px;height:33px;background:#D3DFF6;border-top:2px solid #EEF3FD;border-left:2px solid #EEF3FD;border-bottom:2px solid #9BA3B8;border-right:2px solid #9BA3B8"></div>
<div class="r" style="left:10px;top:438px;width:178px;height:1px;background:#8C93A8;"></div>
<div class="r" style="left:188px;top:371px;width:2px;height:67px;background:#A4ACC2;"></div>
<div class="r" style="left:10px;top:605px;width:33px;height:33px;background:#D3DFF6;border-top:2px solid #EEF3FD;border-left:2px solid #EEF3FD;border-bottom:2px solid #9BA3B8;border-right:2px solid #9BA3B8"></div>
<div class="r" style="left:44px;top:605px;width:110px;height:33px;background:#D3DFF6;border-top:2px solid #EEF3FD;border-left:2px solid #EEF3FD;border-bottom:2px solid #9BA3B8;border-right:2px solid #9BA3B8"></div>
<div class="t " style="left:48.00px;top:377.00px;font-size:20px;line-height:22.34px;color:#000;font-weight:400;letter-spacing:0.177px;">2020_10_13</div>
<div class="t " style="left:31.50px;top:412.00px;font-size:19.5px;line-height:21.78px;color:#000;font-weight:400;letter-spacing:0.162px;">Mute</div>
<div class="t " style="left:124.00px;top:412.00px;font-size:19.5px;line-height:21.78px;color:#000;font-weight:400;letter-spacing:-0.007px;">Solo</div>
<div class="t " style="left:73.00px;top:612.00px;font-size:19.5px;line-height:21.78px;color:#000;font-weight:400;letter-spacing:0.301px;">Select</div>
<div class="t " style="left:15.00px;top:556.00px;font-size:19.5px;line-height:21.78px;color:#000;font-weight:400;letter-spacing:0.179px;">Mono, 16000Hz</div>
<div class="t " style="left:15.00px;top:578.00px;font-size:19.5px;line-height:21.78px;color:#000;font-weight:400;letter-spacing:0.412px;">32-bit float</div>
<div class="t " style="left:29.00px;top:498.00px;font-size:17px;line-height:18.99px;color:#000;font-weight:400;">L</div>
<div class="t " style="left:155.00px;top:498.00px;font-size:17px;line-height:18.99px;color:#000;font-weight:400;">R</div>
<svg style="left:0;top:0" width="260" height="660" viewBox="0 0 260 660">
<path d="M21 381.500 L35.500 395.500 M35.500 381.500 L21 395.500" stroke="#000" stroke-width="2.8"/>
<path d="M164 381 H184 L174 393 Z" fill="#000"/>
<path d="M17 629.500 H38 L27.500 618.500 Z" fill="#000"/>
<path d="M30 471.5 H172" stroke="#A2A2A2" stroke-width="3.4"/><path d="M30.0 470.5 V463.5" stroke="#B5B5B5" stroke-width="1.5"/><path d="M41.8 470.5 V466.5" stroke="#B5B5B5" stroke-width="1.5"/><path d="M53.7 470.5 V466.5" stroke="#B5B5B5" stroke-width="1.5"/><path d="M65.5 470.5 V466.5" stroke="#B5B5B5" stroke-width="1.5"/><path d="M77.3 470.5 V466.5" stroke="#B5B5B5" stroke-width="1.5"/><path d="M89.2 470.5 V466.5" stroke="#B5B5B5" stroke-width="1.5"/><path d="M101.0 470.5 V466.5" stroke="#B5B5B5" stroke-width="1.5"/><path d="M112.8 470.5 V466.5" stroke="#B5B5B5" stroke-width="1.5"/><path d="M124.7 470.5 V466.5" stroke="#B5B5B5" stroke-width="1.5"/><path d="M136.5 470.5 V466.5" stroke="#B5B5B5" stroke-width="1.5"/><path d="M148.3 470.5 V466.5" stroke="#B5B5B5" stroke-width="1.5"/><path d="M160.2 470.5 V466.5" stroke="#B5B5B5" stroke-width="1.5"/><path d="M172.0 470.5 V463.5" stroke="#B5B5B5" stroke-width="1.5"/><circle cx="99" cy="471.0" r="6.15" fill="#A8A8D0" stroke="#4C4CE8" stroke-width="6.300000000000001"/>
<path d="M30 528.5 H172" stroke="#A2A2A2" stroke-width="3.4"/><path d="M30.0 527.5 V520.5" stroke="#B5B5B5" stroke-width="1.5"/><path d="M41.8 527.5 V523.5" stroke="#B5B5B5" stroke-width="1.5"/><path d="M53.7 527.5 V523.5" stroke="#B5B5B5" stroke-width="1.5"/><path d="M65.5 527.5 V523.5" stroke="#B5B5B5" stroke-width="1.5"/><path d="M77.3 527.5 V523.5" stroke="#B5B5B5" stroke-width="1.5"/><path d="M89.2 527.5 V523.5" stroke="#B5B5B5" stroke-width="1.5"/><path d="M101.0 527.5 V523.5" stroke="#B5B5B5" stroke-width="1.5"/><path d="M112.8 527.5 V523.5" stroke="#B5B5B5" stroke-width="1.5"/><path d="M124.7 527.5 V523.5" stroke="#B5B5B5" stroke-width="1.5"/><path d="M136.5 527.5 V523.5" stroke="#B5B5B5" stroke-width="1.5"/><path d="M148.3 527.5 V523.5" stroke="#B5B5B5" stroke-width="1.5"/><path d="M160.2 527.5 V523.5" stroke="#B5B5B5" stroke-width="1.5"/><path d="M172.0 527.5 V520.5" stroke="#B5B5B5" stroke-width="1.5"/><circle cx="99" cy="528.0" r="6.15" fill="#A8A8D0" stroke="#4C4CE8" stroke-width="6.300000000000001"/>
<g stroke="#000" stroke-width="2"><path d="M30.500 452 H39.500 M157.500 452 H166.500 M162 447.500 V456.500"/></g>
<path d="M239 438 H246 M239 504.500 H246 M239 572 H246" stroke="#000" stroke-width="1.5"/>
</svg>
<div class="t " style="left:204.50px;top:373.00px;font-size:21.5px;line-height:24.02px;color:#000;font-weight:700;">1.0</div>
<div class="t " style="left:204.50px;top:427.00px;font-size:21.5px;line-height:24.02px;color:#000;font-weight:400;">0.5</div>
<div class="t " style="left:204.50px;top:493.00px;font-size:21.5px;line-height:24.02px;color:#000;font-weight:700;">0.0</div>
<div class="t " style="left:197.30px;top:561.00px;font-size:21.5px;line-height:24.02px;color:#000;font-weight:400;">-0.5</div>
<div class="t " style="left:197.30px;top:612.00px;font-size:21.5px;line-height:24.02px;color:#000;font-weight:700;">-1.0</div>
<svg style="left:0;top:0" width="1799" height="660" viewBox="0 0 1799 660">
<rect x="247" y="503.500" width="1509" height="2" fill="#4646C8"/>
<g fill="#4646C8"><rect x="653" y="503.0" width="1" height="2.0"/><rect x="654" y="494.4" width="1" height="14.1"/><rect x="655" y="499.0" width="1" height="13.4"/><rect x="656" y="499.3" width="1" height="14.4"/><rect x="657" y="499.0" width="1" height="12.7"/><rect x="658" y="491.6" width="1" height="19.9"/><rect x="659" y="488.7" width="1" height="25.7"/><rect x="660" y="496.5" width="1" height="20.4"/><rect x="661" y="494.1" width="1" height="22.1"/><rect x="662" y="493.1" width="1" height="21.5"/><rect x="663" y="478.1" width="1" height="35.6"/><rect x="664" y="477.1" width="1" height="38.1"/><rect x="665" y="492.5" width="1" height="28.0"/><rect x="666" y="491.2" width="1" height="27.9"/><rect x="667" y="491.2" width="1" height="27.4"/><rect x="668" y="472.4" width="1" height="45.7"/><rect x="669" y="472.4" width="1" height="44.6"/><rect x="670" y="490.9" width="1" height="34.2"/><rect x="671" y="487.8" width="1" height="32.4"/><rect x="672" y="472.3" width="1" height="49.3"/><rect x="673" y="471.4" width="1" height="48.8"/><rect x="674" y="486.7" width="1" height="42.8"/><rect x="675" y="489.2" width="1" height="40.3"/><rect x="676" y="487.7" width="1" height="37.9"/><rect x="677" y="469.4" width="1" height="51.3"/><rect x="678" y="468.7" width="1" height="50.4"/><rect x="679" y="488.6" width="1" height="39.5"/><rect x="680" y="490.0" width="1" height="30.1"/><rect x="681" y="490.7" width="1" height="29.8"/><rect x="682" y="470.7" width="1" height="48.6"/><rect x="683" y="470.5" width="1" height="46.5"/><rect x="684" y="488.7" width="1" height="33.4"/><rect x="685" y="490.2" width="1" height="25.8"/><rect x="686" y="476.5" width="1" height="40.6"/><rect x="687" y="479.6" width="1" height="35.3"/><rect x="688" y="494.7" width="1" height="22.7"/><rect x="689" y="493.9" width="1" height="23.8"/><rect x="690" y="494.6" width="1" height="17.7"/><rect x="691" y="488.7" width="1" height="24.6"/><rect x="692" y="491.6" width="1" height="20.8"/><rect x="693" y="498.5" width="1" height="16.2"/><rect x="694" y="498.8" width="1" height="14.1"/><rect x="695" y="498.8" width="1" height="12.1"/><rect x="696" y="492.3" width="1" height="19.9"/><rect x="697" y="493.0" width="1" height="17.6"/><rect x="698" y="498.5" width="1" height="14.7"/><rect x="699" y="498.5" width="1" height="12.2"/><rect x="700" y="499.7" width="1" height="9.6"/><rect x="701" y="495.2" width="1" height="14.7"/><rect x="702" y="495.4" width="1" height="13.0"/><rect x="703" y="498.7" width="1" height="11.7"/><rect x="704" y="499.1" width="1" height="9.6"/><rect x="705" y="497.7" width="1" height="10.5"/><rect x="706" y="498.4" width="1" height="9.8"/><rect x="707" y="499.5" width="1" height="10.3"/><rect x="708" y="498.4" width="1" height="9.9"/><rect x="709" y="499.7" width="1" height="8.8"/><rect x="710" y="499.2" width="1" height="8.6"/><rect x="711" y="498.6" width="1" height="10.7"/><rect x="712" y="498.3" width="1" height="13.0"/><rect x="713" y="499.1" width="1" height="10.0"/><rect x="714" y="499.5" width="1" height="10.3"/><rect x="715" y="497.3" width="1" height="11.5"/><rect x="716" y="496.8" width="1" height="12.6"/><rect x="717" y="500.4" width="1" height="11.9"/><rect x="718" y="500.6" width="1" height="9.4"/><rect x="719" y="495.5" width="1" height="15.4"/><rect x="720" y="495.2" width="1" height="17.7"/><rect x="721" y="499.1" width="1" height="15.5"/><rect x="722" y="499.4" width="1" height="16.1"/><rect x="723" y="499.0" width="1" height="12.7"/><rect x="724" y="492.2" width="1" height="23.0"/><rect x="725" y="492.3" width="1" height="21.1"/><rect x="726" y="498.9" width="1" height="17.2"/><rect x="727" y="498.2" width="1" height="14.4"/><rect x="728" y="497.1" width="1" height="15.2"/><rect x="729" y="491.2" width="1" height="23.8"/><rect x="730" y="489.8" width="1" height="22.4"/><rect x="731" y="496.9" width="1" height="20.7"/><rect x="732" y="496.7" width="1" height="21.6"/><rect x="733" y="488.0" width="1" height="30.5"/><rect x="734" y="488.9" width="1" height="29.2"/><rect x="735" y="497.2" width="1" height="23.2"/><rect x="736" y="496.2" width="1" height="19.4"/><rect x="737" y="496.5" width="1" height="14.7"/><rect x="738" y="486.6" width="1" height="27.0"/><rect x="739" y="486.2" width="1" height="26.8"/><rect x="740" y="494.9" width="1" height="20.6"/><rect x="741" y="496.3" width="1" height="15.9"/><rect x="742" y="495.8" width="1" height="14.9"/><rect x="743" y="487.2" width="1" height="24.2"/><rect x="744" y="486.7" width="1" height="26.0"/><rect x="745" y="494.2" width="1" height="20.8"/><rect x="746" y="494.3" width="1" height="19.3"/><rect x="747" y="494.2" width="1" height="17.5"/><rect x="748" y="486.8" width="1" height="24.5"/><rect x="749" y="486.8" width="1" height="24.4"/><rect x="750" y="495.1" width="1" height="20.7"/><rect x="751" y="494.5" width="1" height="17.4"/><rect x="752" y="485.8" width="1" height="27.1"/><rect x="753" y="487.1" width="1" height="25.3"/><rect x="754" y="494.4" width="1" height="21.0"/><rect x="755" y="494.8" width="1" height="17.0"/><rect x="756" y="496.3" width="1" height="16.3"/><rect x="757" y="487.0" width="1" height="25.6"/><rect x="758" y="486.1" width="1" height="25.4"/><rect x="759" y="496.4" width="1" height="18.9"/><rect x="760" y="495.8" width="1" height="14.9"/><rect x="761" y="497.4" width="1" height="13.2"/><rect x="762" y="488.2" width="1" height="24.2"/><rect x="763" y="490.1" width="1" height="22.3"/><rect x="764" y="496.2" width="1" height="18.2"/><rect x="765" y="497.8" width="1" height="13.2"/><rect x="766" y="491.7" width="1" height="17.6"/><rect x="767" y="490.9" width="1" height="19.3"/><rect x="768" y="498.3" width="1" height="13.6"/><rect x="769" y="498.8" width="1" height="12.7"/><rect x="770" y="498.4" width="1" height="9.9"/><rect x="771" y="494.3" width="1" height="14.0"/><rect x="772" y="494.9" width="1" height="13.6"/><rect x="773" y="500.3" width="1" height="9.3"/><rect x="774" y="498.8" width="1" height="9.7"/><rect x="775" y="498.8" width="1" height="8.8"/><rect x="776" y="498.3" width="1" height="9.6"/><rect x="777" y="499.3" width="1" height="8.5"/><rect x="778" y="500.8" width="1" height="7.7"/><rect x="779" y="500.8" width="1" height="5.8"/><rect x="780" y="500.4" width="1" height="6.4"/><rect x="781" y="500.7" width="1" height="6.8"/><rect x="782" y="501.5" width="1" height="6.7"/><rect x="783" y="500.8" width="1" height="7.4"/><rect x="784" y="501.4" width="1" height="5.6"/><rect x="785" y="500.8" width="1" height="6.5"/><rect x="786" y="501.0" width="1" height="5.9"/><rect x="787" y="501.7" width="1" height="6.0"/><rect x="788" y="501.1" width="1" height="5.7"/><rect x="789" y="501.5" width="1" height="5.6"/><rect x="790" y="501.0" width="1" height="5.6"/><rect x="791" y="500.9" width="1" height="5.8"/><rect x="792" y="501.3" width="1" height="6.6"/><rect x="793" y="501.2" width="1" height="5.5"/><rect x="794" y="501.0" width="1" height="6.1"/><rect x="795" y="500.1" width="1" height="6.9"/><rect x="796" y="499.8" width="1" height="6.6"/><rect x="797" y="500.4" width="1" height="7.6"/><rect x="798" y="499.7" width="1" height="6.6"/><rect x="799" y="499.7" width="1" height="6.9"/><rect x="800" y="499.6" width="1" height="6.9"/><rect x="801" y="501.0" width="1" height="6.8"/><rect x="802" y="499.7" width="1" height="7.4"/><rect x="803" y="501.0" width="1" height="5.9"/><rect x="804" y="499.8" width="1" height="6.5"/><rect x="805" y="499.9" width="1" height="7.3"/><rect x="806" y="501.2" width="1" height="6.7"/><rect x="807" y="501.1" width="1" height="5.6"/><rect x="808" y="500.3" width="1" height="6.7"/><rect x="809" y="500.9" width="1" height="5.8"/><rect x="810" y="500.9" width="1" height="5.7"/><rect x="811" y="501.9" width="1" height="5.7"/><rect x="812" y="501.3" width="1" height="4.9"/><rect x="813" y="501.0" width="1" height="5.7"/><rect x="814" y="501.1" width="1" height="5.5"/><rect x="815" y="501.1" width="1" height="6.9"/><rect x="816" y="501.8" width="1" height="6.6"/><rect x="817" y="500.7" width="1" height="6.9"/><rect x="818" y="500.7" width="1" height="6.2"/><rect x="819" y="500.6" width="1" height="6.9"/><rect x="820" y="501.2" width="1" height="7.0"/><rect x="821" y="499.8" width="1" height="8.0"/><rect x="822" y="497.5" width="1" height="9.6"/><rect x="823" y="496.4" width="1" height="11.8"/><rect x="824" y="494.5" width="1" height="13.7"/><rect x="825" y="499.4" width="1" height="9.9"/><rect x="826" y="497.5" width="1" height="10.7"/><rect x="827" y="490.3" width="1" height="19.1"/><rect x="828" y="487.6" width="1" height="21.9"/><rect x="829" y="496.6" width="1" height="14.9"/><rect x="830" y="496.3" width="1" height="15.6"/><rect x="831" y="494.8" width="1" height="14.4"/><rect x="832" y="483.6" width="1" height="27.0"/><rect x="833" y="483.5" width="1" height="25.5"/><rect x="834" y="493.4" width="1" height="18.4"/><rect x="835" y="494.5" width="1" height="14.9"/><rect x="836" y="494.3" width="1" height="15.2"/><rect x="837" y="481.7" width="1" height="28.2"/><rect x="838" y="481.0" width="1" height="29.0"/><rect x="839" y="493.6" width="1" height="18.9"/><rect x="840" y="494.4" width="1" height="15.1"/><rect x="841" y="495.0" width="1" height="14.5"/><rect x="842" y="483.7" width="1" height="27.0"/><rect x="843" y="485.7" width="1" height="24.7"/><rect x="844" y="494.0" width="1" height="18.2"/><rect x="845" y="494.7" width="1" height="15.4"/><rect x="846" y="487.1" width="1" height="23.9"/><rect x="847" y="488.0" width="1" height="22.2"/><rect x="848" y="496.1" width="1" height="16.8"/><rect x="849" y="497.3" width="1" height="13.3"/><rect x="850" y="496.8" width="1" height="13.0"/><rect x="851" y="490.4" width="1" height="18.6"/><rect x="852" y="491.4" width="1" height="17.0"/><rect x="853" y="498.6" width="1" height="12.3"/><rect x="854" y="498.4" width="1" height="9.6"/><rect x="855" y="498.9" width="1" height="10.0"/><rect x="856" y="491.4" width="1" height="16.9"/><rect x="857" y="492.7" width="1" height="14.9"/><rect x="858" y="498.9" width="1" height="10.4"/><rect x="859" y="499.2" width="1" height="8.6"/><rect x="860" y="493.3" width="1" height="15.2"/><rect x="861" y="492.4" width="1" height="15.5"/><rect x="862" y="499.2" width="1" height="10.3"/><rect x="863" y="499.2" width="1" height="9.8"/><rect x="864" y="499.7" width="1" height="7.8"/><rect x="865" y="493.6" width="1" height="14.0"/><rect x="866" y="494.1" width="1" height="13.5"/><rect x="867" y="499.9" width="1" height="8.8"/><rect x="868" y="499.8" width="1" height="7.5"/><rect x="869" y="500.0" width="1" height="6.8"/><rect x="870" y="494.7" width="1" height="12.4"/><rect x="871" y="494.5" width="1" height="12.8"/><rect x="872" y="499.2" width="1" height="9.2"/><rect x="873" y="499.4" width="1" height="8.1"/><rect x="874" y="495.3" width="1" height="11.5"/><rect x="875" y="494.8" width="1" height="11.7"/><rect x="876" y="499.7" width="1" height="8.3"/><rect x="877" y="499.2" width="1" height="8.7"/><rect x="878" y="497.8" width="1" height="8.9"/><rect x="879" y="498.9" width="1" height="7.9"/><rect x="880" y="500.4" width="1" height="6.0"/><rect x="881" y="500.9" width="1" height="6.5"/><rect x="882" y="500.5" width="1" height="6.0"/><rect x="883" y="500.9" width="1" height="5.5"/><rect x="884" y="500.5" width="1" height="5.6"/><rect x="885" y="500.8" width="1" height="4.7"/><rect x="886" y="501.8" width="1" height="4.6"/><rect x="887" y="501.9" width="1" height="4.0"/><rect x="888" y="501.4" width="1" height="4.2"/><rect x="889" y="501.0" width="1" height="4.5"/><rect x="890" y="501.2" width="1" height="3.9"/><rect x="891" y="501.5" width="1" height="4.2"/><rect x="892" y="502.1" width="1" height="3.0"/><rect x="893" y="501.9" width="1" height="3.1"/><rect x="894" y="502.2" width="1" height="2.8"/><rect x="895" y="503.0" width="1" height="2.0"/><rect x="896" y="502.9" width="1" height="2.1"/><rect x="897" y="503.0" width="1" height="2.0"/><rect x="898" y="503.0" width="1" height="2.0"/><rect x="1303" y="503.0" width="1" height="2.0"/><rect x="1304" y="474.8" width="1" height="41.8"/><rect x="1305" y="489.9" width="1" height="31.3"/><rect x="1306" y="492.0" width="1" height="31.6"/><rect x="1307" y="492.4" width="1" height="24.7"/><rect x="1308" y="486.9" width="1" height="27.9"/><rect x="1309" y="486.8" width="1" height="28.6"/><rect x="1310" y="494.2" width="1" height="26.3"/><rect x="1311" y="493.6" width="1" height="24.9"/><rect x="1312" y="493.4" width="1" height="20.5"/><rect x="1313" y="480.9" width="1" height="31.9"/><rect x="1314" y="478.3" width="1" height="35.0"/><rect x="1315" y="489.5" width="1" height="30.1"/><rect x="1316" y="492.5" width="1" height="26.2"/><rect x="1317" y="488.2" width="1" height="28.7"/><rect x="1318" y="472.2" width="1" height="41.9"/><rect x="1319" y="471.4" width="1" height="45.8"/><rect x="1320" y="489.2" width="1" height="30.7"/><rect x="1321" y="489.5" width="1" height="26.1"/><rect x="1322" y="485.4" width="1" height="28.7"/><rect x="1323" y="468.5" width="1" height="47.4"/><rect x="1324" y="468.1" width="1" height="48.7"/><rect x="1325" y="489.0" width="1" height="32.6"/><rect x="1326" y="487.6" width="1" height="26.4"/><rect x="1327" y="490.1" width="1" height="26.5"/><rect x="1328" y="469.7" width="1" height="46.4"/><rect x="1329" y="471.0" width="1" height="45.7"/><rect x="1330" y="488.4" width="1" height="35.8"/><rect x="1331" y="490.0" width="1" height="29.8"/><rect x="1332" y="485.6" width="1" height="31.2"/><rect x="1333" y="468.3" width="1" height="51.1"/><rect x="1334" y="469.4" width="1" height="47.2"/><rect x="1335" y="489.3" width="1" height="32.4"/><rect x="1336" y="486.8" width="1" height="30.2"/><rect x="1337" y="490.2" width="1" height="25.5"/><rect x="1338" y="475.7" width="1" height="37.9"/><rect x="1339" y="477.1" width="1" height="39.4"/><rect x="1340" y="491.7" width="1" height="28.2"/><rect x="1341" y="492.2" width="1" height="21.4"/><rect x="1342" y="491.5" width="1" height="21.5"/><rect x="1343" y="479.2" width="1" height="36.3"/><rect x="1344" y="478.4" width="1" height="36.2"/><rect x="1345" y="492.5" width="1" height="24.5"/><rect x="1346" y="492.2" width="1" height="20.2"/><rect x="1347" y="493.7" width="1" height="16.8"/><rect x="1348" y="484.6" width="1" height="26.4"/><rect x="1349" y="486.0" width="1" height="24.9"/><rect x="1350" y="496.9" width="1" height="14.9"/><rect x="1351" y="496.3" width="1" height="12.6"/><rect x="1352" y="498.1" width="1" height="10.8"/><rect x="1353" y="493.5" width="1" height="15.7"/><rect x="1354" y="494.4" width="1" height="13.5"/><rect x="1355" y="497.2" width="1" height="11.8"/><rect x="1356" y="499.1" width="1" height="8.2"/><rect x="1357" y="499.0" width="1" height="7.8"/><rect x="1358" y="499.5" width="1" height="8.0"/><rect x="1359" y="500.4" width="1" height="7.3"/><rect x="1360" y="500.1" width="1" height="7.8"/><rect x="1361" y="501.3" width="1" height="4.9"/><rect x="1362" y="501.3" width="1" height="4.7"/><rect x="1363" y="501.2" width="1" height="4.6"/><rect x="1364" y="501.9" width="1" height="4.8"/><rect x="1365" y="501.5" width="1" height="5.8"/><rect x="1366" y="501.3" width="1" height="5.1"/><rect x="1367" y="501.2" width="1" height="5.5"/><rect x="1368" y="501.2" width="1" height="5.5"/><rect x="1369" y="501.3" width="1" height="6.8"/><rect x="1370" y="498.6" width="1" height="8.3"/><rect x="1371" y="498.6" width="1" height="10.0"/><rect x="1372" y="496.1" width="1" height="12.7"/><rect x="1373" y="494.5" width="1" height="15.3"/><rect x="1374" y="498.4" width="1" height="15.7"/><rect x="1375" y="496.2" width="1" height="17.3"/><rect x="1376" y="495.2" width="1" height="16.6"/><rect x="1377" y="486.3" width="1" height="30.0"/><rect x="1378" y="481.0" width="1" height="36.3"/><rect x="1379" y="491.8" width="1" height="31.8"/><rect x="1380" y="491.1" width="1" height="33.3"/><rect x="1381" y="487.6" width="1" height="38.5"/><rect x="1382" y="472.9" width="1" height="47.7"/><rect x="1383" y="477.7" width="1" height="41.2"/><rect x="1384" y="491.5" width="1" height="35.0"/><rect x="1385" y="490.8" width="1" height="29.1"/><rect x="1386" y="492.7" width="1" height="26.1"/><rect x="1387" y="481.9" width="1" height="36.6"/><rect x="1388" y="483.4" width="1" height="37.0"/><rect x="1389" y="494.5" width="1" height="32.2"/><rect x="1390" y="493.3" width="1" height="25.7"/><rect x="1391" y="495.1" width="1" height="21.8"/><rect x="1392" y="483.0" width="1" height="34.1"/><rect x="1393" y="484.6" width="1" height="27.9"/><rect x="1394" y="494.3" width="1" height="20.9"/><rect x="1395" y="494.9" width="1" height="16.5"/><rect x="1396" y="494.4" width="1" height="16.4"/><rect x="1397" y="485.4" width="1" height="27.0"/><rect x="1398" y="484.1" width="1" height="29.0"/><rect x="1399" y="492.8" width="1" height="23.2"/><rect x="1400" y="493.8" width="1" height="18.3"/><rect x="1401" y="490.1" width="1" height="23.6"/><rect x="1402" y="477.1" width="1" height="34.4"/><rect x="1403" y="474.2" width="1" height="39.7"/><rect x="1404" y="489.1" width="1" height="27.4"/><rect x="1405" y="488.0" width="1" height="26.6"/><rect x="1406" y="473.7" width="1" height="37.7"/><rect x="1407" y="473.5" width="1" height="39.0"/><rect x="1408" y="488.4" width="1" height="26.7"/><rect x="1409" y="488.0" width="1" height="27.8"/><rect x="1410" y="489.5" width="1" height="21.7"/><rect x="1411" y="472.2" width="1" height="39.5"/><rect x="1412" y="473.1" width="1" height="38.6"/><rect x="1413" y="491.1" width="1" height="25.4"/><rect x="1414" y="490.9" width="1" height="26.3"/><rect x="1415" y="490.9" width="1" height="21.3"/><rect x="1416" y="479.2" width="1" height="33.9"/><rect x="1417" y="479.5" width="1" height="34.9"/><rect x="1418" y="494.5" width="1" height="20.8"/><rect x="1419" y="495.1" width="1" height="18.3"/><rect x="1420" y="496.0" width="1" height="14.2"/><rect x="1421" y="487.1" width="1" height="23.5"/><rect x="1422" y="486.2" width="1" height="25.1"/><rect x="1423" y="495.8" width="1" height="17.0"/><rect x="1424" y="495.8" width="1" height="13.2"/><rect x="1425" y="497.9" width="1" height="12.1"/><rect x="1426" y="490.4" width="1" height="17.6"/><rect x="1427" y="491.5" width="1" height="16.9"/><rect x="1428" y="498.8" width="1" height="11.0"/><rect x="1429" y="499.6" width="1" height="7.8"/><rect x="1430" y="499.8" width="1" height="7.9"/><rect x="1431" y="495.0" width="1" height="12.1"/><rect x="1432" y="496.0" width="1" height="11.0"/><rect x="1433" y="498.7" width="1" height="9.9"/><rect x="1434" y="498.1" width="1" height="8.8"/><rect x="1435" y="500.6" width="1" height="6.2"/><rect x="1436" y="499.7" width="1" height="7.4"/><rect x="1437" y="500.5" width="1" height="5.9"/><rect x="1438" y="501.1" width="1" height="5.9"/><rect x="1439" y="501.8" width="1" height="4.6"/><rect x="1440" y="501.5" width="1" height="4.2"/><rect x="1441" y="501.7" width="1" height="4.0"/><rect x="1442" y="501.5" width="1" height="4.2"/><rect x="1443" y="501.9" width="1" height="4.8"/><rect x="1444" y="502.3" width="1" height="3.3"/><rect x="1445" y="501.9" width="1" height="3.9"/><rect x="1446" y="502.2" width="1" height="3.6"/><rect x="1447" y="502.2" width="1" height="3.3"/><rect x="1448" y="502.8" width="1" height="3.4"/><rect x="1449" y="502.1" width="1" height="3.5"/><rect x="1450" y="502.0" width="1" height="3.1"/><rect x="1451" y="502.2" width="1" height="3.2"/><rect x="1452" y="492.1" width="1" height="22.2"/><rect x="1453" y="499.3" width="1" height="15.1"/><rect x="1454" y="499.8" width="1" height="11.3"/><rect x="1455" y="495.8" width="1" height="13.7"/><rect x="1456" y="497.2" width="1" height="12.7"/><rect x="1457" y="496.7" width="1" height="15.2"/><rect x="1458" y="500.0" width="1" height="11.6"/><rect x="1459" y="500.0" width="1" height="9.6"/><rect x="1460" y="493.9" width="1" height="15.1"/><rect x="1461" y="493.9" width="1" height="16.8"/><rect x="1462" y="499.0" width="1" height="13.0"/><rect x="1463" y="499.7" width="1" height="13.2"/><rect x="1464" y="499.5" width="1" height="12.2"/><rect x="1465" y="494.4" width="1" height="17.5"/><rect x="1466" y="495.8" width="1" height="14.0"/><rect x="1467" y="500.5" width="1" height="13.1"/><rect x="1468" y="499.7" width="1" height="11.3"/><rect x="1469" y="500.3" width="1" height="10.8"/><rect x="1470" y="495.4" width="1" height="16.5"/><rect x="1471" y="495.3" width="1" height="16.9"/><rect x="1472" y="499.7" width="1" height="13.3"/><rect x="1473" y="499.5" width="1" height="10.8"/><rect x="1474" y="499.9" width="1" height="10.4"/><rect x="1475" y="495.3" width="1" height="14.4"/><rect x="1476" y="495.8" width="1" height="13.8"/><rect x="1477" y="500.4" width="1" height="12.4"/><rect x="1478" y="499.9" width="1" height="9.6"/><rect x="1479" y="500.1" width="1" height="10.5"/><rect x="1480" y="495.5" width="1" height="13.3"/><rect x="1481" y="493.5" width="1" height="16.5"/><rect x="1482" y="497.5" width="1" height="14.1"/><rect x="1483" y="497.6" width="1" height="13.3"/><rect x="1484" y="496.0" width="1" height="15.4"/><rect x="1485" y="488.1" width="1" height="22.2"/><rect x="1486" y="486.1" width="1" height="24.1"/><rect x="1487" y="492.6" width="1" height="21.5"/><rect x="1488" y="491.8" width="1" height="19.4"/><rect x="1489" y="491.2" width="1" height="20.5"/><rect x="1490" y="479.4" width="1" height="33.5"/><rect x="1491" y="475.7" width="1" height="35.3"/><rect x="1492" y="490.1" width="1" height="25.4"/><rect x="1493" y="492.2" width="1" height="19.7"/><rect x="1494" y="493.1" width="1" height="18.4"/><rect x="1495" y="480.3" width="1" height="32.4"/><rect x="1496" y="480.4" width="1" height="31.2"/><rect x="1497" y="495.1" width="1" height="20.3"/><rect x="1498" y="493.6" width="1" height="18.1"/><rect x="1499" y="494.5" width="1" height="17.3"/><rect x="1500" y="481.6" width="1" height="31.4"/><rect x="1501" y="483.1" width="1" height="28.5"/><rect x="1502" y="493.6" width="1" height="23.2"/><rect x="1503" y="492.5" width="1" height="19.5"/><rect x="1504" y="481.5" width="1" height="32.9"/><rect x="1505" y="480.3" width="1" height="32.8"/><rect x="1506" y="493.0" width="1" height="25.9"/><rect x="1507" y="493.0" width="1" height="24.5"/><rect x="1508" y="492.9" width="1" height="20.2"/><rect x="1509" y="478.8" width="1" height="36.0"/><rect x="1510" y="480.4" width="1" height="31.3"/><rect x="1511" y="491.8" width="1" height="23.2"/><rect x="1512" y="494.4" width="1" height="21.4"/><rect x="1513" y="493.0" width="1" height="19.8"/><rect x="1514" y="480.8" width="1" height="31.9"/><rect x="1515" y="480.9" width="1" height="29.5"/><rect x="1516" y="494.7" width="1" height="19.1"/><rect x="1517" y="492.7" width="1" height="19.2"/><rect x="1518" y="494.7" width="1" height="16.2"/><rect x="1519" y="482.3" width="1" height="28.1"/><rect x="1520" y="483.2" width="1" height="26.4"/><rect x="1521" y="493.6" width="1" height="19.1"/><rect x="1522" y="495.1" width="1" height="14.7"/><rect x="1523" y="493.0" width="1" height="17.6"/><rect x="1524" y="484.1" width="1" height="24.7"/><rect x="1525" y="482.4" width="1" height="27.9"/><rect x="1526" y="494.4" width="1" height="16.3"/><rect x="1527" y="493.2" width="1" height="15.7"/><rect x="1528" y="493.5" width="1" height="15.8"/><rect x="1529" y="483.9" width="1" height="24.3"/><rect x="1530" y="484.3" width="1" height="23.9"/><rect x="1531" y="495.3" width="1" height="15.4"/><rect x="1532" y="494.3" width="1" height="13.8"/><rect x="1533" y="496.1" width="1" height="12.3"/><rect x="1534" y="486.1" width="1" height="22.2"/><rect x="1535" y="487.7" width="1" height="20.2"/><rect x="1536" y="495.7" width="1" height="14.6"/><rect x="1537" y="497.6" width="1" height="10.7"/><rect x="1538" y="496.4" width="1" height="11.1"/><rect x="1539" y="489.5" width="1" height="18.1"/><rect x="1540" y="490.7" width="1" height="17.5"/><rect x="1541" y="497.8" width="1" height="11.2"/><rect x="1542" y="498.5" width="1" height="9.1"/><rect x="1543" y="498.8" width="1" height="8.6"/><rect x="1544" y="493.7" width="1" height="13.2"/><rect x="1545" y="496.1" width="1" height="10.9"/><rect x="1546" y="498.4" width="1" height="8.9"/><rect x="1547" y="499.5" width="1" height="7.0"/><rect x="1548" y="501.7" width="1" height="4.1"/><rect x="1549" y="501.3" width="1" height="4.4"/><rect x="1550" y="501.5" width="1" height="4.4"/><rect x="1551" y="502.2" width="1" height="4.3"/><rect x="1552" y="501.9" width="1" height="3.6"/><rect x="1553" y="501.5" width="1" height="3.9"/><rect x="1554" y="501.6" width="1" height="4.3"/><rect x="1555" y="502.1" width="1" height="4.0"/><rect x="1556" y="502.1" width="1" height="4.0"/><rect x="1557" y="501.8" width="1" height="3.5"/><rect x="1558" y="501.9" width="1" height="3.9"/><rect x="1559" y="502.0" width="1" height="3.6"/><rect x="1560" y="502.6" width="1" height="3.3"/><rect x="1561" y="502.5" width="1" height="3.2"/><rect x="1562" y="502.4" width="1" height="2.6"/><rect x="1563" y="502.5" width="1" height="2.5"/><rect x="1564" y="502.8" width="1" height="2.2"/><rect x="1565" y="502.9" width="1" height="2.1"/><rect x="1566" y="503.0" width="1" height="2.0"/><rect x="1567" y="503.0" width="1" height="2.0"/></g>
<rect x="973.200" y="371" width="1.600" height="267" fill="#2A6E2E"/>
</svg>
<div class="r" style="left:1767px;top:360px;width:32px;height:523px;background:#F0F0F0;"></div>
<div class="r" style="left:1769px;top:391px;width:28px;height:457px;background:#CDCDCD;"></div>
<svg style="left:0;top:0" width="1799" height="920" viewBox="0 0 1799 920">
<path d="M1777 381.500 L1782.800 375.500 L1788.600 381.500" stroke="#505050" stroke-width="3.4" fill="none"/>
<path d="M1777 864 L1782.800 870 L1788.600 864" stroke="#505050" stroke-width="3.4" fill="none"/>
</svg>
<div class="r" style="left:0px;top:883px;width:1799px;height:32px;background:#F0F0F0;"></div>
<div class="r" style="left:331px;top:885px;width:51px;height:28px;background:#CDCDCD;"></div>
<div class="r" style="left:0px;top:914px;width:1799px;height:2px;background:#CDCDD0;"></div>
<svg style="left:0;top:0" width="1799" height="920" viewBox="0 0 1799 920">
<path d="M273.500 892.500 L267.500 898.300 L273.500 904.100" stroke="#505050" stroke-width="3.4" fill="none"/>
<path d="M1749 892.500 L1755 898.300 L1749 904.100" stroke="#505050" stroke-width="3.4" fill="none"/>
</svg>
<svg style="left:766px;top:799px" width="24" height="34" viewBox="0 0 24 34">
<path d="M2 2 V26 L8 20 L12.500 30 L16 28.500 L11.500 19 H19 Z" fill="#fff" stroke="#000" stroke-width="1.6" stroke-linejoin="round"/></svg>
<div class="r" style="left:0px;top:915px;width:1799px;height:106px;background:#F7F8FD;"></div>
<div class="r" style="left:0px;top:917px;width:20px;height:102px;background:#F7F8FC;border-right:2px solid #D0D1D6"></div>
<div class="r" style="left:6.0px;top:927px;width:9.0px;height:2px;background:#D8D9DE;"></div>
<div class="r" style="left:6.0px;top:934.5px;width:9.0px;height:2px;background:#D8D9DE;"></div>
<div class="r" style="left:6.0px;top:942.0px;width:9.0px;height:2px;background:#D8D9DE;"></div>
<div class="r" style="left:6.0px;top:949.5px;width:9.0px;height:2px;background:#D8D9DE;"></div>
<div class="r" style="left:6.0px;top:957.0px;width:9.0px;height:2px;background:#D8D9DE;"></div>
<div class="r" style="left:6.0px;top:964.5px;width:9.0px;height:2px;background:#D8D9DE;"></div>
<div class="r" style="left:6.0px;top:972.0px;width:9.0px;height:2px;background:#D8D9DE;"></div>
<div class="r" style="left:6.0px;top:979.5px;width:9.0px;height:2px;background:#D8D9DE;"></div>
<div class="r" style="left:6.0px;top:987.0px;width:9.0px;height:2px;background:#D8D9DE;"></div>
<div class="r" style="left:6.0px;top:994.5px;width:9.0px;height:2px;background:#D8D9DE;"></div>
<div class="r" style="left:6.0px;top:1002.0px;width:9.0px;height:2px;background:#D8D9DE;"></div>
<div class="r" style="left:6.0px;top:1009.5px;width:9.0px;height:2px;background:#D8D9DE;"></div>
<div class="r" style="left:0px;top:1019px;width:1799px;height:2px;background:#C9CACF;"></div>
<div class="t " style="left:32.00px;top:936.00px;font-size:23px;line-height:25.69px;color:#000;font-weight:400;letter-spacing:-0.257px;">Project Rate (Hz)</div>
<div class="t " style="left:229.00px;top:936.00px;font-size:23px;line-height:25.69px;color:#000;font-weight:400;letter-spacing:0.190px;">Snap-To</div>
<div class="r" style="left:216px;top:932px;width:2px;height:29px;background:#C4C4C8;"></div>
<div class="r" style="left:216px;top:978px;width:2px;height:28px;background:#C4C4C8;"></div>
<div class="r" style="left:377px;top:932px;width:2px;height:29px;background:#C4C4C8;"></div>
<div class="r" style="left:377px;top:978px;width:2px;height:28px;background:#C4C4C8;"></div>
<div class="r" style="left:32px;top:971px;width:149px;height:42px;background:#fff;border:2px solid #7A7A7A"></div>
<div class="t " style="left:45.00px;top:978.00px;font-size:23px;line-height:25.69px;color:#000;font-weight:400;letter-spacing:-0.192px;">16000</div>
<div class="r" style="left:229px;top:971px;width:136px;height:42px;background:#E1E1E1;border:1px solid #ADADAD"></div>
<div class="t " style="left:237.00px;top:980.28px;font-size:23px;line-height:25.69px;color:#000;font-weight:400;letter-spacing:-0.252px;">Off</div>
<svg style="left:0;top:0" width="1799" height="1065"><path d="M340 988.5 L348 996.5 L356 988.5" stroke="#444" stroke-width="1.7" fill="none"/></svg>
<svg style="left:0;top:0" width="400" height="1065"><path d="M157.500 988.500 L165.500 996.500 L173.500 988.500" stroke="#444" stroke-width="1.9" fill="none"/></svg>
<div class="r" style="left:391px;top:926px;width:595px;height:42px;background:#E1E1E1;border:1px solid #ADADAD"></div>
<div class="t " style="left:398.00px;top:935.28px;font-size:23px;line-height:25.69px;color:#000;font-weight:400;letter-spacing:-0.126px;">Start and Length of Selection</div>
<svg style="left:0;top:0" width="1799" height="1065"><path d="M961 943.5 L969 951.5 L977 943.5" stroke="#444" stroke-width="1.7" fill="none"/></svg>
<div class="r" style="left:391px;top:972px;width:291px;height:39px;background:#B9BBC8;border-top:3px solid #8A8A8A;border-left:3px solid #8A8A8A"></div>
<div class="r" style="left:394px;top:975px;width:21.5px;height:35px;background:#D6D6DA;"></div>
<div class="t " style="left:397.52px;top:979.00px;font-size:26px;line-height:29.04px;color:#1C1CC4;font-weight:400;-webkit-text-stroke:0;">0</div>
<div class="r" style="left:415.5px;top:975px;width:21.5px;height:35px;background:#D6D6DA;"></div>
<div class="t " style="left:419.02px;top:979.00px;font-size:26px;line-height:29.04px;color:#1C1CC4;font-weight:400;-webkit-text-stroke:0;">0</div>
<div class="r" style="left:437.0px;top:975px;width:24px;height:35px;background:#B9BBC8;"></div>
<div class="t " style="left:441.77px;top:979.00px;font-size:26px;line-height:29.04px;color:#1C1CC4;font-weight:400;-webkit-text-stroke:0;">h</div>
<div class="r" style="left:461.0px;top:975px;width:21px;height:35px;background:#D6D6DA;"></div>
<div class="t " style="left:464.27px;top:979.00px;font-size:26px;line-height:29.04px;color:#1C1CC4;font-weight:400;-webkit-text-stroke:0;">0</div>
<div class="r" style="left:482.0px;top:975px;width:21px;height:35px;background:#D6D6DA;"></div>
<div class="t " style="left:485.27px;top:979.00px;font-size:26px;line-height:29.04px;color:#1C1CC4;font-weight:400;-webkit-text-stroke:0;">0</div>
<div class="r" style="left:503.0px;top:975px;width:31px;height:35px;background:#B9BBC8;"></div>
<div class="t " style="left:507.67px;top:979.00px;font-size:26px;line-height:29.04px;color:#1C1CC4;font-weight:400;-webkit-text-stroke:0;">m</div>
<div class="r" style="left:534.0px;top:975px;width:21px;height:35px;background:#D6D6DA;"></div>
<div class="t " style="left:537.27px;top:979.00px;font-size:26px;line-height:29.04px;color:#1C1CC4;font-weight:400;-webkit-text-stroke:0;">0</div>
<div class="r" style="left:555.0px;top:975px;width:21px;height:35px;background:#D6D6DA;"></div>
<div class="t " style="left:558.27px;top:979.00px;font-size:26px;line-height:29.04px;color:#1C1CC4;font-weight:400;-webkit-text-stroke:0;">3</div>
<div class="r" style="left:576.0px;top:975px;width:7px;height:35px;background:#D6D6DA;"></div>
<div class="t " style="left:575.89px;top:979.00px;font-size:26px;line-height:29.04px;color:#1C1CC4;font-weight:400;-webkit-text-stroke:0;">.</div>
<div class="r" style="left:583.0px;top:975px;width:21px;height:35px;background:#D6D6DA;"></div>
<div class="t " style="left:586.27px;top:979.00px;font-size:26px;line-height:29.04px;color:#1C1CC4;font-weight:400;-webkit-text-stroke:0;">3</div>
<div class="r" style="left:604.0px;top:975px;width:21px;height:35px;background:#D6D6DA;"></div>
<div class="t " style="left:607.27px;top:979.00px;font-size:26px;line-height:29.04px;color:#1C1CC4;font-weight:400;-webkit-text-stroke:0;">8</div>
<div class="r" style="left:625.0px;top:975px;width:21px;height:35px;background:#D6D6DA;"></div>
<div class="t " style="left:628.27px;top:979.00px;font-size:26px;line-height:29.04px;color:#1C1CC4;font-weight:400;-webkit-text-stroke:0;">0</div>
<div class="r" style="left:646.0px;top:975px;width:22px;height:35px;background:#B9BBC8;"></div>
<div class="t " style="left:650.50px;top:979.00px;font-size:26px;line-height:29.04px;color:#1C1CC4;font-weight:400;-webkit-text-stroke:0;">s</div>
<div class="r" style="left:668.0px;top:975px;width:17px;height:35px;background:#B4B6C4;border-left:1px solid #D8D8DC"></div>
<div class="r" style="left:695px;top:972px;width:273px;height:40px;background:#111;"></div>
<div class="r" style="left:698px;top:975px;width:21.5px;height:34px;background:#D6D6DA;"></div>
<div class="t " style="left:701.52px;top:979.00px;font-size:26px;line-height:29.04px;color:#1C1CC4;font-weight:400;-webkit-text-stroke:0;">0</div>
<div class="r" style="left:719.5px;top:975px;width:21.5px;height:34px;background:#D6D6DA;"></div>
<div class="t " style="left:723.02px;top:979.00px;font-size:26px;line-height:29.04px;color:#1C1CC4;font-weight:400;-webkit-text-stroke:0;">0</div>
<div class="r" style="left:741.0px;top:975px;width:24px;height:34px;background:#B9BBC8;"></div>
<div class="t " style="left:745.77px;top:979.00px;font-size:26px;line-height:29.04px;color:#1C1CC4;font-weight:400;-webkit-text-stroke:0;">h</div>
<div class="r" style="left:765.0px;top:975px;width:21px;height:34px;background:#D6D6DA;"></div>
<div class="t " style="left:768.27px;top:979.00px;font-size:26px;line-height:29.04px;color:#1C1CC4;font-weight:400;-webkit-text-stroke:0;">0</div>
<div class="r" style="left:786.0px;top:975px;width:21px;height:34px;background:#D6D6DA;"></div>
<div class="t " style="left:789.27px;top:979.00px;font-size:26px;line-height:29.04px;color:#1C1CC4;font-weight:400;-webkit-text-stroke:0;">0</div>
<div class="r" style="left:807.0px;top:975px;width:31px;height:34px;background:#B9BBC8;"></div>
<div class="t " style="left:811.67px;top:979.00px;font-size:26px;line-height:29.04px;color:#1C1CC4;font-weight:400;-webkit-text-stroke:0;">m</div>
<div class="r" style="left:838.0px;top:975px;width:21px;height:34px;background:#D6D6DA;"></div>
<div class="t " style="left:841.27px;top:979.00px;font-size:26px;line-height:29.04px;color:#1C1CC4;font-weight:400;-webkit-text-stroke:0;">0</div>
<div class="r" style="left:859.0px;top:975px;width:21px;height:34px;background:#D6D6DA;"></div>
<div class="t " style="left:862.27px;top:979.00px;font-size:26px;line-height:29.04px;color:#1C1CC4;font-weight:400;-webkit-text-stroke:0;">1</div>
<div class="r" style="left:880.0px;top:975px;width:5px;height:34px;background:#D6D6DA;"></div>
<div class="t " style="left:878.89px;top:979.00px;font-size:26px;line-height:29.04px;color:#1C1CC4;font-weight:400;-webkit-text-stroke:0;">.</div>
<div class="r" style="left:885.0px;top:975px;width:21px;height:34px;background:#fff;"></div>
<div class="t " style="left:888.27px;top:979.00px;font-size:26px;line-height:29.04px;color:#000;font-weight:400;-webkit-text-stroke:0;">0</div>
<div class="r" style="left:906.0px;top:975px;width:21px;height:34px;background:#D6D6DA;"></div>
<div class="t " style="left:909.27px;top:979.00px;font-size:26px;line-height:29.04px;color:#1C1CC4;font-weight:400;-webkit-text-stroke:0;">0</div>
<div class="r" style="left:927.0px;top:975px;width:21px;height:34px;background:#D6D6DA;"></div>
<div class="t " style="left:930.27px;top:979.00px;font-size:26px;line-height:29.04px;color:#1C1CC4;font-weight:400;-webkit-text-stroke:0;">0</div>
<div class="r" style="left:948.0px;top:975px;width:18px;height:34px;background:#B9BBC8;"></div>
<div class="t " style="left:950.50px;top:979.00px;font-size:26px;line-height:29.04px;color:#1C1CC4;font-weight:400;-webkit-text-stroke:0;">s</div>
<div class="r" style="left:968px;top:975px;width:17px;height:36px;background:#B4B6C4;border-top:3px solid #8A8A8A"></div>
<svg style="left:0;top:0" width="1799" height="1065">
<path d="M666 986 H679 L672.500 994 Z" fill="#000"/><path d="M970 986 H983 L976.500 994 Z" fill="#000"/></svg>
<div class="r" style="left:997px;top:917px;width:2px;height:102px;background:#C9CACF;"></div>
<div class="r" style="left:999px;top:917px;width:19px;height:102px;background:#F7F8FC;border-right:2px solid #D0D1D6"></div>
<div class="r" style="left:1004.7px;top:927px;width:8.55px;height:2px;background:#D8D9DE;"></div>
<div class="r" style="left:1004.7px;top:934.5px;width:8.55px;height:2px;background:#D8D9DE;"></div>
<div class="r" style="left:1004.7px;top:942.0px;width:8.55px;height:2px;background:#D8D9DE;"></div>
<div class="r" style="left:1004.7px;top:949.5px;width:8.55px;height:2px;background:#D8D9DE;"></div>
<div class="r" style="left:1004.7px;top:957.0px;width:8.55px;height:2px;background:#D8D9DE;"></div>
<div class="r" style="left:1004.7px;top:964.5px;width:8.55px;height:2px;background:#D8D9DE;"></div>
<div class="r" style="left:1004.7px;top:972.0px;width:8.55px;height:2px;background:#D8D9DE;"></div>
<div class="r" style="left:1004.7px;top:979.5px;width:8.55px;height:2px;background:#D8D9DE;"></div>
<div class="r" style="left:1004.7px;top:987.0px;width:8.55px;height:2px;background:#D8D9DE;"></div>
<div class="r" style="left:1004.7px;top:994.5px;width:8.55px;height:2px;background:#D8D9DE;"></div>
<div class="r" style="left:1004.7px;top:1002.0px;width:8.55px;height:2px;background:#D8D9DE;"></div>
<div class="r" style="left:1004.7px;top:1009.5px;width:8.55px;height:2px;background:#D8D9DE;"></div>
<div class="r" style="left:1021px;top:930px;width:437px;height:73px;background:#B9BBC8;border-top:3px solid #8A8A8A;border-left:3px solid #8A8A8A"></div>
<div class="r" style="left:1024px;top:933px;width:40px;height:69px;background:#D6D6DA;"></div>
<div class="t " style="left:1029.54px;top:941.00px;font-size:52px;line-height:58.08px;color:#1C1CC4;font-weight:400;-webkit-text-stroke:0.5px currentColor;">0</div>
<div class="r" style="left:1064px;top:933px;width:40px;height:69px;background:#D6D6DA;"></div>
<div class="t " style="left:1069.54px;top:941.00px;font-size:52px;line-height:58.08px;color:#1C1CC4;font-weight:400;-webkit-text-stroke:0.5px currentColor;">0</div>
<div class="r" style="left:1104px;top:933px;width:59px;height:69px;background:#B9BBC8;"></div>
<div class="t " style="left:1119.04px;top:941.00px;font-size:52px;line-height:58.08px;color:#1C1CC4;font-weight:400;-webkit-text-stroke:0.5px currentColor;">h</div>
<div class="r" style="left:1163px;top:933px;width:40px;height:69px;background:#D6D6DA;"></div>
<div class="t " style="left:1168.54px;top:941.00px;font-size:52px;line-height:58.08px;color:#1C1CC4;font-weight:400;-webkit-text-stroke:0.5px currentColor;">0</div>
<div class="r" style="left:1203px;top:933px;width:40px;height:69px;background:#D6D6DA;"></div>
<div class="t " style="left:1208.54px;top:941.00px;font-size:52px;line-height:58.08px;color:#1C1CC4;font-weight:400;-webkit-text-stroke:0.5px currentColor;">0</div>
<div class="r" style="left:1243px;top:933px;width:74px;height:69px;background:#B9BBC8;"></div>
<div class="t " style="left:1258.34px;top:941.00px;font-size:52px;line-height:58.08px;color:#1C1CC4;font-weight:400;-webkit-text-stroke:0.5px currentColor;">m</div>
<div class="r" style="left:1317px;top:933px;width:40px;height:69px;background:#D6D6DA;"></div>
<div class="t " style="left:1322.54px;top:941.00px;font-size:52px;line-height:58.08px;color:#1C1CC4;font-weight:400;-webkit-text-stroke:0.5px currentColor;">0</div>
<div class="r" style="left:1357px;top:933px;width:40px;height:69px;background:#D6D6DA;"></div>
<div class="t " style="left:1362.54px;top:941.00px;font-size:52px;line-height:58.08px;color:#1C1CC4;font-weight:400;-webkit-text-stroke:0.5px currentColor;">4</div>
<div class="r" style="left:1397px;top:933px;width:44px;height:69px;background:#B9BBC8;"></div>
<div class="t " style="left:1412.00px;top:941.00px;font-size:52px;line-height:58.08px;color:#1C1CC4;font-weight:400;-webkit-text-stroke:0.5px currentColor;">s</div>
<div class="r" style="left:1441px;top:936px;width:15px;height:64px;background:#B4B6C4;border-left:1px solid #D8D8DC"></div>
<div class="r" style="left:1463px;top:917px;width:2px;height:102px;background:#C9CACF;"></div>
<div class="r" style="left:1468px;top:917px;width:2px;height:102px;background:#C9CACF;"></div>
<svg style="left:0;top:0" width="1799" height="1065"><path d="M1443 963 H1454 L1448.500 970 Z" fill="#000"/></svg>
<div class="r" style="left:0px;top:1021px;width:1799px;height:44px;background:#F0F0F0;"></div>
<div class="r" style="left:19px;top:1025px;width:1px;height:38px;background:#D0D0D0;"></div>
<div class="r" style="left:339px;top:1025px;width:1px;height:38px;background:#D0D0D0;"></div>
<div class="r" style="left:1463px;top:1025px;width:1px;height:38px;background:#D0D0D0;"></div>
<div class="t " style="left:27.00px;top:1032.50px;font-size:22.5px;line-height:25.13px;color:#000;font-weight:400;transform:scaleX(0.9682);transform-origin:0 0;-webkit-text-stroke:0.3px #000;">Playing.</div>
<div class="t " style="left:1473.00px;top:1032.50px;font-size:22.5px;line-height:25.13px;color:#000;font-weight:400;transform:scaleX(0.9405);transform-origin:0 0;-webkit-text-stroke:0.3px #000;">Actual Rate: 16000</div>
<div class="r" style="left:0px;top:1062px;width:1799px;height:1px;background:#FCFCFC;"></div>
<div class="r" style="left:0px;top:1063px;width:1799px;height:2px;background:#5A5A5A;"></div>
<div class="r" style="left:0px;top:0px;width:1px;height:1065px;background:#8a8a8a;"></div>
<div class="r" style="left:1798px;top:0px;width:1px;height:1065px;background:#7a7a7a;"></div>
<svg style="left:0;top:0" width="1799" height="1065"><g fill="#BCBCBC"><rect x="1791.700" y="1045.900" width="2.800" height="2.800"/><rect x="1786" y="1051.500" width="2.800" height="2.800"/><rect x="1791.700" y="1051.500" width="2.800" height="2.800"/><rect x="1780.300" y="1057.100" width="2.800" height="2.800"/><rect x="1786" y="1057.100" width="2.800" height="2.800"/><rect x="1791.700" y="1057.100" width="2.800" height="2.800"/></g></svg>
</body></html>
